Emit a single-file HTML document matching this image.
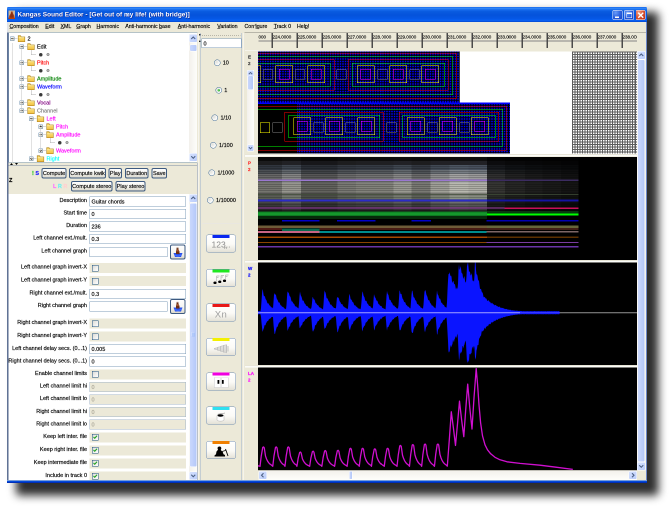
<!DOCTYPE html>
<html><head><meta charset="utf-8"><title>Kangas Sound Editor</title><style>
html,body{margin:0;padding:0;background:#fff;width:670px;height:506px;overflow:hidden}
#s{position:absolute;left:0;top:0;width:1340px;height:1012px;transform:scale(.5);transform-origin:0 0;will-change:transform;font-family:"Liberation Sans",sans-serif;font-size:11px;color:#000}
#s div,#s span,#s svg{position:absolute;display:block}
#s .t{white-space:nowrap;-webkit-text-stroke:.3px currentColor}
#s b{position:static;display:inline}
u{text-decoration:underline}
</style></head><body><div id="s">
<div style="left:32px;top:24px;width:1285px;height:967px;background:#2e2e2e;filter:blur(9px);border-radius:6px"></div>
<div style="left:14px;top:14px;width:1280px;height:952px;background:#ece9d8;border-radius:2.5px 2.5px 0 0;"></div>
<div style="left:14px;top:14px;width:1280px;height:30px;border-radius:2.5px 2.5px 0 0;background:linear-gradient(#0a5ae8 0,#3b8ffa 7%,#1a6ff0 16%,#0a5be0 30%,#0553dc 55%,#0658e6 78%,#0a62f5 90%,#0347cf 100%)"></div>
<div style="left:14px;top:44px;width:2.5px;height:21px;background:#dfe2ea"></div>
<div style="left:14px;top:65px;width:2.5px;height:901px;background:linear-gradient(90deg,#8c9ab4,#4d6187 40%,#5a6d92)"></div>
<div style="left:1291.5px;top:44px;width:2.5px;height:922px;background:linear-gradient(90deg,#c8d0e4,#5f7fca 45%,#3a5ab0)"></div>
<div style="left:14px;top:961px;width:1280px;height:5px;background:linear-gradient(#0855dd,#0046d8 60%,#001ea0)"></div>
<svg style="left:17px;top:21px" width="13" height="17" viewBox="0 0 16 18" preserveAspectRatio="none"><rect width="16" height="18" fill="#cdb596"/><path d="M6.500 2h3.500l1 4 3.500 5.500V18H1.500v-6l4-6z" fill="#a8421e"/><path d="M7 4h2l1 3 2 4v7H4v-6l2-5z" fill="#8c3012"/><rect x="0" y="15" width="16" height="3" fill="#b4400f"/></svg>
<span class="t" style="left:35px;top:20.0px;line-height:18px;font-size:13px;color:#fff;font-weight:bold;text-shadow:1px 1px 0 #0a1883;-webkit-text-stroke:0">Kangas Sound Editor - [Get out of my life! (with bridge)]</span>
<div style="left:1225px;top:20px;width:20px;height:19.5px;background:radial-gradient(circle at 30% 25%,#6a9cf8,#2c62e0 50%,#1c48c8 85%);border:1px solid #fff;border-radius:3px;box-sizing:border-box"></div>
<div style="left:1230px;top:33px;width:8px;height:3px;background:#fff"></div>
<div style="left:1248px;top:20px;width:20px;height:19.5px;background:radial-gradient(circle at 30% 25%,#6a9cf8,#2c62e0 50%,#1c48c8 85%);border:1px solid #fff;border-radius:3px;box-sizing:border-box"></div>
<div style="left:1253px;top:25px;width:11px;height:11px;border:1px solid #fff;border-top:3px solid #fff;box-sizing:border-box"></div>
<div style="left:1271px;top:20px;width:20px;height:19.5px;background:radial-gradient(circle at 30% 25%,#f0a088,#dc5a38 45%,#c4381c 80%);border:1px solid #fff;border-radius:3px;box-sizing:border-box"></div>
<svg style="left:1275px;top:24px" width="13" height="13" viewBox="0 0 13 13"><path d="M1.500 1.500l10 10M11.500 1.500l-10 10" stroke="#fff" stroke-width="2.8"/></svg>
<div style="left:17px;top:44px;width:1274.5px;height:20.5px;background:#ece9d8"></div>
<span class="t" style="left:19px;top:45.25px;line-height:15.5px;font-size:10.5px;"><u>C</u>omposition</span>
<span class="t" style="left:90.5px;top:45.25px;line-height:15.5px;font-size:10.5px;"><u>E</u>dit</span>
<span class="t" style="left:121px;top:45.25px;line-height:15.5px;font-size:10.5px;"><u>X</u>ML</span>
<span class="t" style="left:152.5px;top:45.25px;line-height:15.5px;font-size:10.5px;"><u>G</u>raph</span>
<span class="t" style="left:193px;top:45.25px;line-height:15.5px;font-size:10.5px;"><u>H</u>armonic</span>
<span class="t" style="left:250.5px;top:45.25px;line-height:15.5px;font-size:10.5px;">Anti-harmonic <u>b</u>ase</span>
<span class="t" style="left:355.5px;top:45.25px;line-height:15.5px;font-size:10.5px;"><u>A</u>nti-harmonic</span>
<span class="t" style="left:434.5px;top:45.25px;line-height:15.5px;font-size:10.5px;"><u>V</u>ariation</span>
<span class="t" style="left:489px;top:45.25px;line-height:15.5px;font-size:10.5px;">Conf<u>i</u>gure</span>
<span class="t" style="left:547.5px;top:45.25px;line-height:15.5px;font-size:10.5px;"><u>T</u>rack 0</span>
<span class="t" style="left:594px;top:45.25px;line-height:15.5px;font-size:10.5px;">Hel<u>p</u>!</span>
<div style="left:16.5px;top:65px;width:378.5px;height:260px;background:#fff;border:1px solid #7f9db9;box-sizing:border-box"></div>
<div style="left:29px;top:77.4px;width:6px;height:1px;background:#b8b8b8"></div>
<div style="left:19.5px;top:72.9px;width:9px;height:9px;border:1px solid #7898b5;box-sizing:border-box;background:linear-gradient(135deg,#fff,#c9c5b5);border-radius:1px"></div>
<div style="left:21.5px;top:76.9px;width:5px;height:1px;background:#000"></div>
<svg style="left:34.5px;top:70.4px" width="16" height="14" viewBox="0 0 17 14" preserveAspectRatio="none"><path d="M1.5 1.500h5l1.500 2.500H15.500v9.500H1.500z" fill="#f7cf58" stroke="#b08a28" stroke-width="1.3"/><path d="M2.500 5.500h12" stroke="#ffeea0" stroke-width="2"/><path d="M2 12.500h13" stroke="#e0a830" stroke-width="1.6"/></svg>
<span class="t" style="left:55px;top:68.7px;line-height:16px;font-size:11px;color:#000">2</span>
<div style="left:48px;top:93.4px;width:6px;height:1px;background:#b8b8b8"></div>
<div style="left:38.5px;top:88.9px;width:9px;height:9px;border:1px solid #7898b5;box-sizing:border-box;background:linear-gradient(135deg,#fff,#c9c5b5);border-radius:1px"></div>
<div style="left:40.5px;top:92.9px;width:5px;height:1px;background:#000"></div>
<svg style="left:53.5px;top:86.4px" width="16" height="14" viewBox="0 0 17 14" preserveAspectRatio="none"><path d="M1.5 1.500h5l1.500 2.500H15.500v9.500H1.500z" fill="#f7cf58" stroke="#b08a28" stroke-width="1.3"/><path d="M2.500 5.500h12" stroke="#ffeea0" stroke-width="2"/><path d="M2 12.500h13" stroke="#e0a830" stroke-width="1.6"/></svg>
<span class="t" style="left:74px;top:84.7px;line-height:16px;font-size:11px;color:#000">Edit</span>
<div style="left:62px;top:100.4px;width:1px;height:9px;background:#b0b0b0"></div>
<div style="left:62px;top:109.4px;width:10px;height:1px;background:#b0b0b0"></div>
<div style="left:77.5px;top:105.9px;width:7px;height:7px;background:#3a3a3a;border-radius:50%"></div>
<div style="left:93px;top:106.4px;width:6px;height:6px;background:#b4b4b4;border:1.5px solid #707070;box-sizing:border-box;border-radius:50%"></div>
<div style="left:48px;top:125.4px;width:6px;height:1px;background:#b8b8b8"></div>
<div style="left:38.5px;top:120.9px;width:9px;height:9px;border:1px solid #7898b5;box-sizing:border-box;background:linear-gradient(135deg,#fff,#c9c5b5);border-radius:1px"></div>
<div style="left:40.5px;top:124.9px;width:5px;height:1px;background:#000"></div>
<svg style="left:53.5px;top:118.4px" width="16" height="14" viewBox="0 0 17 14" preserveAspectRatio="none"><path d="M1.5 1.500h5l1.500 2.500H15.500v9.500H1.500z" fill="#f7cf58" stroke="#b08a28" stroke-width="1.3"/><path d="M2.500 5.500h12" stroke="#ffeea0" stroke-width="2"/><path d="M2 12.500h13" stroke="#e0a830" stroke-width="1.6"/></svg>
<span class="t" style="left:74px;top:116.7px;line-height:16px;font-size:11px;color:#ff0000">Pitch</span>
<div style="left:62px;top:132.4px;width:1px;height:9px;background:#b0b0b0"></div>
<div style="left:62px;top:141.4px;width:10px;height:1px;background:#b0b0b0"></div>
<div style="left:77.5px;top:137.9px;width:7px;height:7px;background:#3a3a3a;border-radius:50%"></div>
<div style="left:93px;top:138.4px;width:6px;height:6px;background:#b4b4b4;border:1.5px solid #707070;box-sizing:border-box;border-radius:50%"></div>
<div style="left:48px;top:157.4px;width:6px;height:1px;background:#b8b8b8"></div>
<div style="left:38.5px;top:152.9px;width:9px;height:9px;border:1px solid #7898b5;box-sizing:border-box;background:linear-gradient(135deg,#fff,#c9c5b5);border-radius:1px"></div>
<div style="left:40.5px;top:156.9px;width:5px;height:1px;background:#000"></div>
<div style="left:42.5px;top:154.9px;width:1px;height:5px;background:#000"></div>
<svg style="left:53.5px;top:150.4px" width="16" height="14" viewBox="0 0 17 14" preserveAspectRatio="none"><path d="M1.5 1.500h5l1.500 2.500H15.500v9.500H1.500z" fill="#f7cf58" stroke="#b08a28" stroke-width="1.3"/><path d="M2.500 5.500h12" stroke="#ffeea0" stroke-width="2"/><path d="M2 12.500h13" stroke="#e0a830" stroke-width="1.6"/></svg>
<span class="t" style="left:74px;top:148.70000000000002px;line-height:16px;font-size:11px;color:#008000">Amplitude</span>
<div style="left:48px;top:173.4px;width:6px;height:1px;background:#b8b8b8"></div>
<div style="left:38.5px;top:168.9px;width:9px;height:9px;border:1px solid #7898b5;box-sizing:border-box;background:linear-gradient(135deg,#fff,#c9c5b5);border-radius:1px"></div>
<div style="left:40.5px;top:172.9px;width:5px;height:1px;background:#000"></div>
<svg style="left:53.5px;top:166.4px" width="16" height="14" viewBox="0 0 17 14" preserveAspectRatio="none"><path d="M1.5 1.500h5l1.500 2.500H15.500v9.500H1.500z" fill="#f7cf58" stroke="#b08a28" stroke-width="1.3"/><path d="M2.500 5.500h12" stroke="#ffeea0" stroke-width="2"/><path d="M2 12.500h13" stroke="#e0a830" stroke-width="1.6"/></svg>
<span class="t" style="left:74px;top:164.70000000000002px;line-height:16px;font-size:11px;color:#0000ff">Waveform</span>
<div style="left:62px;top:180.4px;width:1px;height:9px;background:#b0b0b0"></div>
<div style="left:62px;top:189.4px;width:10px;height:1px;background:#b0b0b0"></div>
<div style="left:77.5px;top:185.9px;width:7px;height:7px;background:#3a3a3a;border-radius:50%"></div>
<div style="left:93px;top:186.4px;width:6px;height:6px;background:#b4b4b4;border:1.5px solid #707070;box-sizing:border-box;border-radius:50%"></div>
<div style="left:48px;top:205.4px;width:6px;height:1px;background:#b8b8b8"></div>
<div style="left:38.5px;top:200.9px;width:9px;height:9px;border:1px solid #7898b5;box-sizing:border-box;background:linear-gradient(135deg,#fff,#c9c5b5);border-radius:1px"></div>
<div style="left:40.5px;top:204.9px;width:5px;height:1px;background:#000"></div>
<div style="left:42.5px;top:202.9px;width:1px;height:5px;background:#000"></div>
<svg style="left:53.5px;top:198.4px" width="16" height="14" viewBox="0 0 17 14" preserveAspectRatio="none"><path d="M1.5 1.500h5l1.500 2.500H15.500v9.500H1.500z" fill="#f7cf58" stroke="#b08a28" stroke-width="1.3"/><path d="M2.500 5.500h12" stroke="#ffeea0" stroke-width="2"/><path d="M2 12.500h13" stroke="#e0a830" stroke-width="1.6"/></svg>
<span class="t" style="left:74px;top:196.70000000000002px;line-height:16px;font-size:11px;color:#800080">Vocal</span>
<div style="left:48px;top:221.4px;width:6px;height:1px;background:#b8b8b8"></div>
<div style="left:38.5px;top:216.9px;width:9px;height:9px;border:1px solid #7898b5;box-sizing:border-box;background:linear-gradient(135deg,#fff,#c9c5b5);border-radius:1px"></div>
<div style="left:40.5px;top:220.9px;width:5px;height:1px;background:#000"></div>
<svg style="left:53.5px;top:214.4px" width="16" height="14" viewBox="0 0 17 14" preserveAspectRatio="none"><path d="M1.5 1.500h5l1.500 2.500H15.500v9.500H1.500z" fill="#f7cf58" stroke="#b08a28" stroke-width="1.3"/><path d="M2.500 5.500h12" stroke="#ffeea0" stroke-width="2"/><path d="M2 12.500h13" stroke="#e0a830" stroke-width="1.6"/></svg>
<span class="t" style="left:74px;top:212.70000000000002px;line-height:16px;font-size:11px;color:#808080">Channel</span>
<div style="left:67px;top:237.4px;width:6px;height:1px;background:#b8b8b8"></div>
<div style="left:57.5px;top:232.9px;width:9px;height:9px;border:1px solid #7898b5;box-sizing:border-box;background:linear-gradient(135deg,#fff,#c9c5b5);border-radius:1px"></div>
<div style="left:59.5px;top:236.9px;width:5px;height:1px;background:#000"></div>
<svg style="left:72.5px;top:230.4px" width="16" height="14" viewBox="0 0 17 14" preserveAspectRatio="none"><path d="M1.5 1.500h5l1.500 2.500H15.500v9.500H1.500z" fill="#f7cf58" stroke="#b08a28" stroke-width="1.3"/><path d="M2.500 5.500h12" stroke="#ffeea0" stroke-width="2"/><path d="M2 12.500h13" stroke="#e0a830" stroke-width="1.6"/></svg>
<span class="t" style="left:93px;top:228.70000000000002px;line-height:16px;font-size:11px;color:#ff00ff">Left</span>
<div style="left:86px;top:253.4px;width:6px;height:1px;background:#b8b8b8"></div>
<div style="left:76.5px;top:248.9px;width:9px;height:9px;border:1px solid #7898b5;box-sizing:border-box;background:linear-gradient(135deg,#fff,#c9c5b5);border-radius:1px"></div>
<div style="left:78.5px;top:252.9px;width:5px;height:1px;background:#000"></div>
<div style="left:80.5px;top:250.9px;width:1px;height:5px;background:#000"></div>
<svg style="left:91.5px;top:246.4px" width="16" height="14" viewBox="0 0 17 14" preserveAspectRatio="none"><path d="M1.5 1.500h5l1.500 2.500H15.500v9.500H1.500z" fill="#f7cf58" stroke="#b08a28" stroke-width="1.3"/><path d="M2.500 5.500h12" stroke="#ffeea0" stroke-width="2"/><path d="M2 12.500h13" stroke="#e0a830" stroke-width="1.6"/></svg>
<span class="t" style="left:112px;top:244.70000000000002px;line-height:16px;font-size:11px;color:#ff00ff">Pitch</span>
<div style="left:86px;top:269.4px;width:6px;height:1px;background:#b8b8b8"></div>
<div style="left:76.5px;top:264.9px;width:9px;height:9px;border:1px solid #7898b5;box-sizing:border-box;background:linear-gradient(135deg,#fff,#c9c5b5);border-radius:1px"></div>
<div style="left:78.5px;top:268.9px;width:5px;height:1px;background:#000"></div>
<svg style="left:91.5px;top:262.4px" width="16" height="14" viewBox="0 0 17 14" preserveAspectRatio="none"><path d="M1.5 1.500h5l1.500 2.500H15.500v9.500H1.500z" fill="#f7cf58" stroke="#b08a28" stroke-width="1.3"/><path d="M2.500 5.500h12" stroke="#ffeea0" stroke-width="2"/><path d="M2 12.500h13" stroke="#e0a830" stroke-width="1.6"/></svg>
<span class="t" style="left:112px;top:260.7px;line-height:16px;font-size:11px;color:#ff00ff">Amplitude</span>
<div style="left:100px;top:276.4px;width:1px;height:9px;background:#b0b0b0"></div>
<div style="left:100px;top:285.4px;width:10px;height:1px;background:#b0b0b0"></div>
<div style="left:115.5px;top:281.9px;width:7px;height:7px;background:#3a3a3a;border-radius:50%"></div>
<div style="left:131px;top:282.4px;width:6px;height:6px;background:#b4b4b4;border:1.5px solid #707070;box-sizing:border-box;border-radius:50%"></div>
<div style="left:86px;top:301.4px;width:6px;height:1px;background:#b8b8b8"></div>
<div style="left:76.5px;top:296.9px;width:9px;height:9px;border:1px solid #7898b5;box-sizing:border-box;background:linear-gradient(135deg,#fff,#c9c5b5);border-radius:1px"></div>
<div style="left:78.5px;top:300.9px;width:5px;height:1px;background:#000"></div>
<div style="left:80.5px;top:298.9px;width:1px;height:5px;background:#000"></div>
<svg style="left:91.5px;top:294.4px" width="16" height="14" viewBox="0 0 17 14" preserveAspectRatio="none"><path d="M1.5 1.500h5l1.500 2.500H15.500v9.500H1.500z" fill="#f7cf58" stroke="#b08a28" stroke-width="1.3"/><path d="M2.500 5.500h12" stroke="#ffeea0" stroke-width="2"/><path d="M2 12.500h13" stroke="#e0a830" stroke-width="1.6"/></svg>
<span class="t" style="left:112px;top:292.7px;line-height:16px;font-size:11px;color:#ff00ff">Waveform</span>
<div style="left:67px;top:317.4px;width:6px;height:1px;background:#b8b8b8"></div>
<div style="left:57.5px;top:312.9px;width:9px;height:9px;border:1px solid #7898b5;box-sizing:border-box;background:linear-gradient(135deg,#fff,#c9c5b5);border-radius:1px"></div>
<div style="left:59.5px;top:316.9px;width:5px;height:1px;background:#000"></div>
<div style="left:61.5px;top:314.9px;width:1px;height:5px;background:#000"></div>
<svg style="left:72.5px;top:310.4px" width="16" height="14" viewBox="0 0 17 14" preserveAspectRatio="none"><path d="M1.5 1.500h5l1.500 2.500H15.500v9.500H1.500z" fill="#f7cf58" stroke="#b08a28" stroke-width="1.3"/><path d="M2.500 5.500h12" stroke="#ffeea0" stroke-width="2"/><path d="M2 12.500h13" stroke="#e0a830" stroke-width="1.6"/></svg>
<span class="t" style="left:93px;top:308.7px;line-height:16px;font-size:11px;color:#00ffff">Right</span>
<div style="left:24px;top:86px;width:1px;height:239px;background:#c4c4c4"></div>
<div style="left:43px;top:98px;width:1px;height:124px;background:#c4c4c4"></div>
<div style="left:62px;top:238px;width:1px;height:80px;background:#c4c4c4"></div>
<div style="left:81px;top:254px;width:1px;height:48px;background:#c4c4c4"></div>
<div style="left:378px;top:68px;width:17px;height:255px;background:linear-gradient(90deg,#f3f1ec,#fefefb)"></div>
<div style="left:378px;top:68px;width:17px;height:17px;background:linear-gradient(135deg,#d6e2ff,#b9cbfa);border:1px solid #fff;border-radius:3px;box-sizing:border-box"></div>
<svg style="left:378px;top:68px" width="17" height="17" viewBox="0 0 17 17"><path d="M4.5 10l4-4 4 4" fill="none" stroke="#4d6185" stroke-width="2.2"/></svg>
<div style="left:378px;top:306px;width:17px;height:17px;background:linear-gradient(135deg,#d6e2ff,#b9cbfa);border:1px solid #fff;border-radius:3px;box-sizing:border-box"></div>
<svg style="left:378px;top:306px" width="17" height="17" viewBox="0 0 17 17"><path d="M4.5 6.5l4 4 4-4" fill="none" stroke="#4d6185" stroke-width="2.2"/></svg>
<div style="left:379px;top:89px;width:15px;height:14px;background:linear-gradient(90deg,#c9d7fd,#c2d2fc 40%,#b4c8f8);border:1px solid #fff;border-radius:3px;box-sizing:border-box"></div>
<div style="left:16.5px;top:325px;width:378px;height:6px;background:#ece9d8"></div>
<svg style="left:20px;top:325px" width="20" height="5" viewBox="0 0 20 5"><path d="M0 5l3-4 3 4zM10 1l3 4 3-4z" fill="#000"/></svg>
<div style="left:16.5px;top:330px;width:378px;height:58px;background:#ece9d8;border-top:1px solid #7b8ba5;box-sizing:border-box"></div>
<span class="t" style="left:18px;top:351.5px;line-height:16px;font-size:11px;font-weight:bold">Z</span>
<span class="t" style="left:64px;top:337.5px;line-height:16px;font-size:11px;"><b style="color:#00c000">!</b> <b style="color:#2020ff">S</b></span>
<div style="left:83px;top:336px;width:50px;height:21px;border:2px solid #3d5a80;border-radius:4px;box-sizing:border-box;background:linear-gradient(#fff,#f4f3ee 60%,#dcd9cc)"></div>
<span class="t" style="left:-42.0px;width:300px;text-align:center;top:338.0px;line-height:16px;font-size:11px;">Compute</span>
<div style="left:138px;top:336px;width:74px;height:21px;border:2px solid #3d5a80;border-radius:4px;box-sizing:border-box;background:linear-gradient(#fff,#f4f3ee 60%,#dcd9cc)"></div>
<span class="t" style="left:25.0px;width:300px;text-align:center;top:338.0px;line-height:16px;font-size:11px;">Compute kwik</span>
<div style="left:217px;top:336px;width:27px;height:21px;border:2px solid #3d5a80;border-radius:4px;box-sizing:border-box;background:linear-gradient(#fff,#f4f3ee 60%,#dcd9cc)"></div>
<span class="t" style="left:80.5px;width:300px;text-align:center;top:338.0px;line-height:16px;font-size:11px;">Play</span>
<div style="left:250px;top:336px;width:47px;height:21px;border:2px solid #3d5a80;border-radius:4px;box-sizing:border-box;background:linear-gradient(#fff,#f4f3ee 60%,#dcd9cc)"></div>
<span class="t" style="left:123.5px;width:300px;text-align:center;top:338.0px;line-height:16px;font-size:11px;">Duration</span>
<div style="left:303px;top:336px;width:31px;height:21px;border:2px solid #3d5a80;border-radius:4px;box-sizing:border-box;background:linear-gradient(#fff,#f4f3ee 60%,#dcd9cc)"></div>
<span class="t" style="left:168.5px;width:300px;text-align:center;top:338.0px;line-height:16px;font-size:11px;">Save</span>
<span class="t" style="left:106px;top:363.5px;line-height:16px;font-size:11px;"><b style="color:#ff70ff">L</b> <b style="color:#70f0f0">R</b> <b style="color:#ffd0d0">R</b></span>
<div style="left:142px;top:362px;width:83px;height:21px;border:2px solid #3d5a80;border-radius:4px;box-sizing:border-box;background:linear-gradient(#fff,#f4f3ee 60%,#dcd9cc)"></div>
<span class="t" style="left:33.5px;width:300px;text-align:center;top:364.0px;line-height:16px;font-size:11px;">Compute stereo</span>
<div style="left:231px;top:362px;width:60px;height:21px;border:2px solid #3d5a80;border-radius:4px;box-sizing:border-box;background:linear-gradient(#fff,#f4f3ee 60%,#dcd9cc)"></div>
<span class="t" style="left:111.0px;width:300px;text-align:center;top:364.0px;line-height:16px;font-size:11px;">Play stereo</span>
<div style="left:16.5px;top:388px;width:362px;height:572px;background:#fff"></div>
<span class="t" style="right:1166px;top:392.0px;line-height:16px;font-size:11px;">Description</span>
<div style="left:179px;top:392.5px;width:193px;height:20px;background:#fff;border:1px solid #7f9db9;box-sizing:border-box"></div>
<span class="t" style="left:183px;top:394.5px;line-height:16px;font-size:11px;">Guitar chords</span>
<span class="t" style="right:1166px;top:417.0px;line-height:16px;font-size:11px;">Start time</span>
<div style="left:179px;top:417.5px;width:193px;height:20px;background:#fff;border:1px solid #7f9db9;box-sizing:border-box"></div>
<span class="t" style="left:183px;top:419.5px;line-height:16px;font-size:11px;">0</span>
<span class="t" style="right:1166px;top:442.0px;line-height:16px;font-size:11px;">Duration</span>
<div style="left:179px;top:442.5px;width:193px;height:20px;background:#fff;border:1px solid #7f9db9;box-sizing:border-box"></div>
<span class="t" style="left:183px;top:444.5px;line-height:16px;font-size:11px;">236</span>
<span class="t" style="right:1166px;top:467.0px;line-height:16px;font-size:11px;">Left channel ext./mult.</span>
<div style="left:179px;top:467.5px;width:193px;height:20px;background:#fff;border:1px solid #7f9db9;box-sizing:border-box"></div>
<span class="t" style="left:183px;top:469.5px;line-height:16px;font-size:11px;">0.3</span>
<span class="t" style="right:1166px;top:493.0px;line-height:16px;font-size:11px;">Left channel graph</span>
<div style="left:179px;top:493.5px;width:156px;height:20px;background:#fff;border:1px solid #7f9db9;box-sizing:border-box"></div>
<span class="t" style="left:183px;top:495.5px;line-height:16px;font-size:11px;"></span>
<div style="left:340px;top:489px;width:31px;height:30px;border:2px solid #3d5a80;border-radius:4px;box-sizing:border-box;background:linear-gradient(#fff,#f4f3ee 60%,#dcd9cc)"></div>
<svg style="left:346px;top:493px" width="20" height="22" viewBox="0 0 20 22"><path d="M1 13h18l-3 8H4z" fill="#2a50e8"/><path d="M7 1l1 3 1-3 1 3 1-3v5l2 4v5H6v-5l1-4z" fill="#6b2e12"/><path d="M8 6h3l1 4H7z" fill="#a0522d"/><path d="M3 15l7 3 7-3v3l-7 3-7-3z" fill="#3d6cff"/></svg>
<span class="t" style="right:1166px;top:525.0px;line-height:16px;font-size:11px;">Left channel graph invert-X</span>
<div style="left:179px;top:526px;width:193px;height:20px;background:#ece9d8"></div>
<div style="left:184px;top:529.5px;width:13px;height:13px;border:1px solid #1c5180;box-sizing:border-box;background:linear-gradient(135deg,#dcdcd7,#fff)"></div>
<span class="t" style="right:1166px;top:551.0px;line-height:16px;font-size:11px;">Left channel graph invert-Y</span>
<div style="left:179px;top:552px;width:193px;height:20px;background:#ece9d8"></div>
<div style="left:184px;top:555.5px;width:13px;height:13px;border:1px solid #1c5180;box-sizing:border-box;background:linear-gradient(135deg,#dcdcd7,#fff)"></div>
<span class="t" style="right:1166px;top:577.0px;line-height:16px;font-size:11px;">Right channel ext./mult.</span>
<div style="left:179px;top:577.5px;width:193px;height:20px;background:#fff;border:1px solid #7f9db9;box-sizing:border-box"></div>
<span class="t" style="left:183px;top:579.5px;line-height:16px;font-size:11px;">0.3</span>
<span class="t" style="right:1166px;top:602.0px;line-height:16px;font-size:11px;">Right channel graph</span>
<div style="left:179px;top:602.5px;width:156px;height:20px;background:#fff;border:1px solid #7f9db9;box-sizing:border-box"></div>
<span class="t" style="left:183px;top:604.5px;line-height:16px;font-size:11px;"></span>
<div style="left:340px;top:598px;width:31px;height:30px;border:2px solid #3d5a80;border-radius:4px;box-sizing:border-box;background:linear-gradient(#fff,#f4f3ee 60%,#dcd9cc)"></div>
<svg style="left:346px;top:602px" width="20" height="22" viewBox="0 0 20 22"><path d="M1 13h18l-3 8H4z" fill="#2a50e8"/><path d="M7 1l1 3 1-3 1 3 1-3v5l2 4v5H6v-5l1-4z" fill="#6b2e12"/><path d="M8 6h3l1 4H7z" fill="#a0522d"/><path d="M3 15l7 3 7-3v3l-7 3-7-3z" fill="#3d6cff"/></svg>
<span class="t" style="right:1166px;top:636.0px;line-height:16px;font-size:11px;">Right channel graph invert-X</span>
<div style="left:179px;top:637px;width:193px;height:20px;background:#ece9d8"></div>
<div style="left:184px;top:640.5px;width:13px;height:13px;border:1px solid #1c5180;box-sizing:border-box;background:linear-gradient(135deg,#dcdcd7,#fff)"></div>
<span class="t" style="right:1166px;top:662.0px;line-height:16px;font-size:11px;">Right channel graph invert-Y</span>
<div style="left:179px;top:663px;width:193px;height:20px;background:#ece9d8"></div>
<div style="left:184px;top:666.5px;width:13px;height:13px;border:1px solid #1c5180;box-sizing:border-box;background:linear-gradient(135deg,#dcdcd7,#fff)"></div>
<span class="t" style="right:1166px;top:687.5px;line-height:16px;font-size:11px;">Left channel delay secs. (0...1)</span>
<div style="left:179px;top:688.0px;width:193px;height:20px;background:#fff;border:1px solid #7f9db9;box-sizing:border-box"></div>
<span class="t" style="left:183px;top:690.0px;line-height:16px;font-size:11px;">0.005</span>
<span class="t" style="right:1166px;top:712.5px;line-height:16px;font-size:11px;">Right channel delay secs. (0...1)</span>
<div style="left:179px;top:713.0px;width:193px;height:20px;background:#fff;border:1px solid #7f9db9;box-sizing:border-box"></div>
<span class="t" style="left:183px;top:715.0px;line-height:16px;font-size:11px;">0</span>
<span class="t" style="right:1166px;top:737.5px;line-height:16px;font-size:11px;">Enable channel limits</span>
<div style="left:179px;top:738.5px;width:193px;height:20px;background:#ece9d8"></div>
<div style="left:184px;top:742.0px;width:13px;height:13px;border:1px solid #1c5180;box-sizing:border-box;background:linear-gradient(135deg,#dcdcd7,#fff)"></div>
<span class="t" style="right:1166px;top:763.0px;line-height:16px;font-size:11px;">Left channel limit hi</span>
<div style="left:179px;top:763.5px;width:193px;height:20px;background:#ece9d8;border:1px solid #a3b5c8;box-sizing:border-box"></div>
<span class="t" style="left:183px;top:765.5px;line-height:16px;font-size:11px;color:#aca899">0</span>
<span class="t" style="right:1166px;top:788.0px;line-height:16px;font-size:11px;">Left channel limit lo</span>
<div style="left:179px;top:788.5px;width:193px;height:20px;background:#ece9d8;border:1px solid #a3b5c8;box-sizing:border-box"></div>
<span class="t" style="left:183px;top:790.5px;line-height:16px;font-size:11px;color:#aca899">0</span>
<span class="t" style="right:1166px;top:813.5px;line-height:16px;font-size:11px;">Right channel limit hi</span>
<div style="left:179px;top:814.0px;width:193px;height:20px;background:#ece9d8;border:1px solid #a3b5c8;box-sizing:border-box"></div>
<span class="t" style="left:183px;top:816.0px;line-height:16px;font-size:11px;color:#aca899">0</span>
<span class="t" style="right:1166px;top:838.5px;line-height:16px;font-size:11px;">Right channel limit lo</span>
<div style="left:179px;top:839.0px;width:193px;height:20px;background:#ece9d8;border:1px solid #a3b5c8;box-sizing:border-box"></div>
<span class="t" style="left:183px;top:841.0px;line-height:16px;font-size:11px;color:#aca899">0</span>
<span class="t" style="right:1166px;top:863.5px;line-height:16px;font-size:11px;">Keep left inter. file</span>
<div style="left:179px;top:864.5px;width:193px;height:20px;background:#ece9d8"></div>
<div style="left:184px;top:868.0px;width:13px;height:13px;border:1px solid #1c5180;box-sizing:border-box;background:linear-gradient(135deg,#dcdcd7,#fff)"></div>
<svg style="left:184px;top:868.0px" width="13" height="13" viewBox="0 0 13 13"><path d="M3 6l2.5 2.5L10 3.5" fill="none" stroke="#21a121" stroke-width="2.2"/></svg>
<span class="t" style="right:1166px;top:889.5px;line-height:16px;font-size:11px;">Keep right inter. file</span>
<div style="left:179px;top:890.5px;width:193px;height:20px;background:#ece9d8"></div>
<div style="left:184px;top:894.0px;width:13px;height:13px;border:1px solid #1c5180;box-sizing:border-box;background:linear-gradient(135deg,#dcdcd7,#fff)"></div>
<svg style="left:184px;top:894.0px" width="13" height="13" viewBox="0 0 13 13"><path d="M3 6l2.5 2.5L10 3.5" fill="none" stroke="#21a121" stroke-width="2.2"/></svg>
<span class="t" style="right:1166px;top:915.5px;line-height:16px;font-size:11px;">Keep intermediate file</span>
<div style="left:179px;top:916.5px;width:193px;height:20px;background:#ece9d8"></div>
<div style="left:184px;top:920.0px;width:13px;height:13px;border:1px solid #1c5180;box-sizing:border-box;background:linear-gradient(135deg,#dcdcd7,#fff)"></div>
<svg style="left:184px;top:920.0px" width="13" height="13" viewBox="0 0 13 13"><path d="M3 6l2.5 2.5L10 3.5" fill="none" stroke="#21a121" stroke-width="2.2"/></svg>
<span class="t" style="right:1166px;top:941.5px;line-height:16px;font-size:11px;">Include in track 0</span>
<div style="left:179px;top:942.5px;width:193px;height:20px;background:#ece9d8"></div>
<div style="left:184px;top:946.0px;width:13px;height:13px;border:1px solid #1c5180;box-sizing:border-box;background:linear-gradient(135deg,#dcdcd7,#fff)"></div>
<svg style="left:184px;top:946.0px" width="13" height="13" viewBox="0 0 13 13"><path d="M3 6l2.5 2.5L10 3.5" fill="none" stroke="#21a121" stroke-width="2.2"/></svg>
<div style="left:378px;top:388px;width:17px;height:572px;background:linear-gradient(90deg,#f3f1ec,#fefefb)"></div>
<div style="left:378px;top:388px;width:17px;height:17px;background:linear-gradient(135deg,#d6e2ff,#b9cbfa);border:1px solid #fff;border-radius:3px;box-sizing:border-box"></div>
<svg style="left:378px;top:388px" width="17" height="17" viewBox="0 0 17 17"><path d="M4.5 10l4-4 4 4" fill="none" stroke="#4d6185" stroke-width="2.2"/></svg>
<div style="left:378px;top:943px;width:17px;height:17px;background:linear-gradient(135deg,#d6e2ff,#b9cbfa);border:1px solid #fff;border-radius:3px;box-sizing:border-box"></div>
<svg style="left:378px;top:943px" width="17" height="17" viewBox="0 0 17 17"><path d="M4.5 6.5l4 4 4-4" fill="none" stroke="#4d6185" stroke-width="2.2"/></svg>
<div style="left:379px;top:406px;width:15px;height:528px;background:linear-gradient(90deg,#c9d7fd,#c2d2fc 40%,#b4c8f8);border:1px solid #fff;border-radius:3px;box-sizing:border-box"></div>
<svg style="left:382px;top:664px" width="9" height="9" viewBox="0 0 9 9"><path d="M1 1h6M1 3h6M1 5h6M1 7h6" stroke="#eef4fe" stroke-width="1"/><path d="M2 2h6M2 4h6M2 6h6M2 8h6" stroke="#8cb0f8" stroke-width="1"/></svg>
<div style="left:394px;top:65px;width:7px;height:895px;background:#ece9d8"></div>
<div style="left:396px;top:65px;width:1px;height:895px;background:#fff"></div>
<div style="left:394px;top:325px;width:1.2px;height:635px;background:#8797b3"></div>
<div style="left:398px;top:68px;width:3px;height:3px;background:#000;border-radius:50%"></div>
<div style="left:398px;top:81px;width:3px;height:3px;background:#000;border-radius:50%"></div>
<div style="left:401px;top:65px;width:83px;height:895px;background:#ece9d8;border-left:1px solid #9cb0cc;border-right:1px solid #9cb0cc;box-sizing:border-box"></div>
<div style="left:404px;top:70px;width:77px;height:2px;background:repeating-linear-gradient(90deg,#b9b6a8 0 2px,transparent 2px 4px)"></div>
<div style="left:403px;top:77px;width:80px;height:19px;background:#fff;border:1px solid #7f9db9;box-sizing:border-box"></div>
<span class="t" style="left:407px;top:79.0px;line-height:16px;font-size:11px;">0</span>
<div style="left:427.5px;top:118.5px;width:13px;height:13px;border:1.6px solid #2f5d8c;border-radius:50%;box-sizing:border-box;background:radial-gradient(circle at 35% 35%,#e0e0da,#fff 70%)"></div>
<span class="t" style="left:445.5px;top:116.5px;line-height:16px;font-size:11px;">10</span>
<div style="left:430.5px;top:173.5px;width:13px;height:13px;border:1.6px solid #2f5d8c;border-radius:50%;box-sizing:border-box;background:radial-gradient(circle at 35% 35%,#e0e0da,#fff 70%)"></div>
<div style="left:434.5px;top:177.5px;width:5px;height:5px;border-radius:50%;background:radial-gradient(circle at 35% 35%,#6fe06f,#1a9a1a)"></div>
<span class="t" style="left:448.5px;top:171.5px;line-height:16px;font-size:11px;">1</span>
<div style="left:423.0px;top:228.5px;width:13px;height:13px;border:1.6px solid #2f5d8c;border-radius:50%;box-sizing:border-box;background:radial-gradient(circle at 35% 35%,#e0e0da,#fff 70%)"></div>
<span class="t" style="left:441.0px;top:226.5px;line-height:16px;font-size:11px;">1/10</span>
<div style="left:420.0px;top:283.5px;width:13px;height:13px;border:1.6px solid #2f5d8c;border-radius:50%;box-sizing:border-box;background:radial-gradient(circle at 35% 35%,#e0e0da,#fff 70%)"></div>
<span class="t" style="left:438.0px;top:281.5px;line-height:16px;font-size:11px;">1/100</span>
<div style="left:417.0px;top:338.5px;width:13px;height:13px;border:1.6px solid #2f5d8c;border-radius:50%;box-sizing:border-box;background:radial-gradient(circle at 35% 35%,#e0e0da,#fff 70%)"></div>
<span class="t" style="left:435.0px;top:336.5px;line-height:16px;font-size:11px;">1/1000</span>
<div style="left:414.0px;top:393.5px;width:13px;height:13px;border:1.6px solid #2f5d8c;border-radius:50%;box-sizing:border-box;background:radial-gradient(circle at 35% 35%,#e0e0da,#fff 70%)"></div>
<span class="t" style="left:432.0px;top:391.5px;line-height:16px;font-size:11px;">1/10000</span>
<div style="left:404px;top:446px;width:77px;height:1px;background:#d2cfc0"></div>
<div style="left:404px;top:447px;width:77px;height:1px;background:#fff"></div>
<div style="left:412px;top:469px;width:60px;height:36px;border:1.5px solid #6f8cb0;border-radius:5px;box-sizing:border-box;background:linear-gradient(#fff,#fbfaf6 55%,#e4e1d6)"></div>
<div style="left:425px;top:469.8px;width:33.5px;height:6px;background:#0a28f0"></div>
<svg style="left:420px;top:479px" width="44" height="24" viewBox="0 0 44 24"><text x="22" y="16" font-family="Liberation Sans,sans-serif" font-size="17" fill="#8c8c8c" text-anchor="middle">123..</text><text x="31" y="19" font-family="Liberation Sans,sans-serif" font-size="8" fill="#666" text-anchor="middle">n</text></svg>
<div style="left:412px;top:538px;width:60px;height:36px;border:1.5px solid #6f8cb0;border-radius:5px;box-sizing:border-box;background:linear-gradient(#fff,#fbfaf6 55%,#e4e1d6)"></div>
<div style="left:425px;top:538.8px;width:33.5px;height:6px;background:#20e820"></div>
<svg style="left:420px;top:548px" width="44" height="24" viewBox="0 0 44 24"><path d="M13 4v11M22 3v10M31 2v9M13 4h6M22 3h6M31 2h6M13 7h4M22 6h4M31 5h4" stroke="#b4b4b4" stroke-width="1.3" fill="none"/><ellipse cx="10" cy="17.500" rx="3.200" ry="2.600" fill="#000"/><ellipse cx="19.500" cy="15.500" rx="3.200" ry="2.600" fill="#000"/><ellipse cx="29" cy="13.500" rx="3.200" ry="2.600" fill="#000"/></svg>
<div style="left:412px;top:607px;width:60px;height:36px;border:1.5px solid #6f8cb0;border-radius:5px;box-sizing:border-box;background:linear-gradient(#fff,#fbfaf6 55%,#e4e1d6)"></div>
<div style="left:425px;top:607.8px;width:33.5px;height:6px;background:#e81818"></div>
<svg style="left:420px;top:617px" width="44" height="24" viewBox="0 0 44 24"><text x="22" y="17.500" font-family="Liberation Sans,sans-serif" font-size="19" fill="#a0a0a0" text-anchor="middle" letter-spacing="1">Xn</text></svg>
<div style="left:412px;top:675.5px;width:60px;height:36px;border:1.5px solid #6f8cb0;border-radius:5px;box-sizing:border-box;background:linear-gradient(#fff,#fbfaf6 55%,#e4e1d6)"></div>
<div style="left:425px;top:676.3px;width:33.5px;height:6px;background:#f4f000"></div>
<svg style="left:420px;top:685.5px" width="44" height="24" viewBox="0 0 44 24"><path d="M9 10v3M12 9v5M15 8v7M18 7v9M21 6v11M24 5v13M27 4v15M30 3.500v16M33 4v15M36 6v11" stroke="#b8b8b8" stroke-width="1.7"/><path d="M8 11.500L34 3M8 11.500L34 20" stroke="#c4c4c4" stroke-width="1" fill="none"/></svg>
<div style="left:412px;top:744.5px;width:60px;height:36px;border:1.5px solid #6f8cb0;border-radius:5px;box-sizing:border-box;background:linear-gradient(#fff,#fbfaf6 55%,#e4e1d6)"></div>
<div style="left:425px;top:745.3px;width:33.5px;height:6px;background:#f000e0"></div>
<svg style="left:420px;top:754.5px" width="44" height="24" viewBox="0 0 44 24"><rect x="8.500" y="0" width="28" height="20" fill="#fff" stroke="#c8c8c8" stroke-width="1"/><rect x="15" y="5" width="3.600" height="7.600" fill="#000"/><rect x="23.800" y="5" width="3.600" height="7.600" fill="#000"/><path d="M22 1v18" stroke="#aaa" stroke-width="1"/></svg>
<div style="left:412px;top:813px;width:60px;height:36px;border:1.5px solid #6f8cb0;border-radius:5px;box-sizing:border-box;background:linear-gradient(#fff,#fbfaf6 55%,#e4e1d6)"></div>
<div style="left:425px;top:813.8px;width:33.5px;height:6px;background:#30e0f0"></div>
<svg style="left:420px;top:823px" width="44" height="24" viewBox="0 0 44 24"><path d="M15 5.500l15-2.500" stroke="#888" stroke-width="1.2"/><path d="M14 8v9c0 3 14 3 14 0V8" fill="#fff" stroke="#b0b0b0" stroke-width="1"/><ellipse cx="21" cy="8" rx="6" ry="2.400" fill="#000"/></svg>
<div style="left:412px;top:881.5px;width:60px;height:36px;border:1.5px solid #6f8cb0;border-radius:5px;box-sizing:border-box;background:linear-gradient(#fff,#fbfaf6 55%,#e4e1d6)"></div>
<div style="left:425px;top:882.3px;width:33.5px;height:6px;background:#f08000"></div>
<svg style="left:420px;top:891.5px" width="44" height="24" viewBox="0 0 44 24"><path d="M19 1c2.500 0 4 2 3.500 4.500l-1 2.500 4 4 1.500 4.500 3 1.500v3H9v-2l3-2.500 1-5.500 3-3.500-1-3c0-2 1.500-3.500 4-3.500z" fill="#000"/><path d="M31 6l5 14" stroke="#000" stroke-width="1.8"/><path d="M24 11l7-2" stroke="#000" stroke-width="1.500"/></svg>
<div style="left:484px;top:65px;width:5px;height:895px;background:#ece9d8"></div>
<div style="left:486px;top:65px;width:1px;height:895px;background:#fff"></div>
<div style="left:489px;top:64.5px;width:802.5px;height:37.5px;background:#ece9d8;border-top:1.5px solid #85837a;box-sizing:border-box"></div>
<div style="left:517px;top:81px;width:757px;height:2px;background:#848484"></div>
<div style="left:517px;top:66px;width:757px;height:36px;overflow:hidden">
<span class="t" style="left:0;top:0;line-height:16px;font-size:9px;color:#222">000</span>
<div style="left:26.2px;top:0px;width:2.4px;height:30px;background:#4a4a4a"></div>
<span class="t" style="left:28px;top:0;line-height:16px;font-size:9px;color:#111">224.0000</span>
<div style="left:76.2px;top:0px;width:2.4px;height:30px;background:#4a4a4a"></div>
<span class="t" style="left:78px;top:0;line-height:16px;font-size:9px;color:#111">225.0000</span>
<div style="left:126.2px;top:0px;width:2.4px;height:30px;background:#4a4a4a"></div>
<span class="t" style="left:128px;top:0;line-height:16px;font-size:9px;color:#111">226.0000</span>
<div style="left:176.2px;top:0px;width:2.4px;height:30px;background:#4a4a4a"></div>
<span class="t" style="left:178px;top:0;line-height:16px;font-size:9px;color:#111">227.0000</span>
<div style="left:226.2px;top:0px;width:2.4px;height:30px;background:#4a4a4a"></div>
<span class="t" style="left:228px;top:0;line-height:16px;font-size:9px;color:#111">228.0000</span>
<div style="left:276.2px;top:0px;width:2.4px;height:30px;background:#4a4a4a"></div>
<span class="t" style="left:278px;top:0;line-height:16px;font-size:9px;color:#111">229.0000</span>
<div style="left:326.2px;top:0px;width:2.4px;height:30px;background:#4a4a4a"></div>
<span class="t" style="left:328px;top:0;line-height:16px;font-size:9px;color:#111">230.0000</span>
<div style="left:376.2px;top:0px;width:2.4px;height:30px;background:#4a4a4a"></div>
<span class="t" style="left:378px;top:0;line-height:16px;font-size:9px;color:#111">231.0000</span>
<div style="left:426.2px;top:0px;width:2.4px;height:30px;background:#4a4a4a"></div>
<span class="t" style="left:428px;top:0;line-height:16px;font-size:9px;color:#111">232.0000</span>
<div style="left:476.2px;top:0px;width:2.4px;height:30px;background:#4a4a4a"></div>
<span class="t" style="left:478px;top:0;line-height:16px;font-size:9px;color:#111">233.0000</span>
<div style="left:526.2px;top:0px;width:2.4px;height:30px;background:#4a4a4a"></div>
<span class="t" style="left:528px;top:0;line-height:16px;font-size:9px;color:#111">234.0000</span>
<div style="left:576.2px;top:0px;width:2.4px;height:30px;background:#4a4a4a"></div>
<span class="t" style="left:578px;top:0;line-height:16px;font-size:9px;color:#111">235.0000</span>
<div style="left:626.2px;top:0px;width:2.4px;height:30px;background:#4a4a4a"></div>
<span class="t" style="left:628px;top:0;line-height:16px;font-size:9px;color:#111">236.0000</span>
<div style="left:676.2px;top:0px;width:2.4px;height:30px;background:#4a4a4a"></div>
<span class="t" style="left:678px;top:0;line-height:16px;font-size:9px;color:#111">237.0000</span>
<div style="left:726.2px;top:0px;width:2.4px;height:30px;background:#4a4a4a"></div>
<span class="t" style="left:728px;top:0;line-height:16px;font-size:9px;color:#111">238.0000</span>
</div>
<div style="left:489px;top:101px;width:28px;height:208px;background:#ece9d8;border-left:1px solid #fff;border-top:1px solid #fff;box-sizing:border-box"></div>
<span class="t" style="left:496px;top:107.0px;line-height:14px;font-size:9px;color:#404040;font-weight:bold">E</span>
<span class="t" style="left:496px;top:120.0px;line-height:14px;font-size:9px;color:#404040;font-weight:bold">2</span>
<div style="left:489px;top:309px;width:785px;height:4px;background:linear-gradient(#d8d4c4,#fff 40%,#f4f2e8)"></div>
<div style="left:489px;top:313px;width:28px;height:208px;background:#ece9d8;border-left:1px solid #fff;border-top:1px solid #fff;box-sizing:border-box"></div>
<span class="t" style="left:496px;top:319.0px;line-height:14px;font-size:9px;color:#ff2a2a;font-weight:bold">P</span>
<span class="t" style="left:496px;top:332.0px;line-height:14px;font-size:9px;color:#ff2a2a;font-weight:bold">2</span>
<div style="left:489px;top:521px;width:785px;height:4px;background:linear-gradient(#d8d4c4,#fff 40%,#f4f2e8)"></div>
<div style="left:489px;top:524px;width:28px;height:207px;background:#ece9d8;border-left:1px solid #fff;border-top:1px solid #fff;box-sizing:border-box"></div>
<span class="t" style="left:496px;top:530.0px;line-height:14px;font-size:9px;color:#0000ff;font-weight:bold">W</span>
<span class="t" style="left:496px;top:543.0px;line-height:14px;font-size:9px;color:#0000ff;font-weight:bold">2</span>
<div style="left:489px;top:731px;width:785px;height:4px;background:linear-gradient(#d8d4c4,#fff 40%,#f4f2e8)"></div>
<div style="left:489px;top:734px;width:28px;height:208px;background:#ece9d8;border-left:1px solid #fff;border-top:1px solid #fff;box-sizing:border-box"></div>
<span class="t" style="left:496px;top:740.0px;line-height:14px;font-size:9px;color:#ff00ff;font-weight:bold">LA</span>
<span class="t" style="left:496px;top:753.0px;line-height:14px;font-size:9px;color:#ff00ff;font-weight:bold">2</span>
<div style="left:489px;top:942px;width:785px;height:4px;background:linear-gradient(#d8d4c4,#fff 40%,#f4f2e8)"></div>
<div style="left:494px;top:140px;width:14px;height:163px;background:linear-gradient(90deg,#f3f1ec,#fefefb)"></div>
<div style="left:494px;top:140px;width:14px;height:14px;background:linear-gradient(135deg,#d6e2ff,#b9cbfa);border:1px solid #fff;border-radius:3px;box-sizing:border-box"></div>
<svg style="left:494px;top:140px" width="14" height="14" viewBox="0 0 17 17"><path d="M4.5 10l4-4 4 4" fill="none" stroke="#4d6185" stroke-width="2.2"/></svg>
<div style="left:494px;top:289px;width:14px;height:14px;background:linear-gradient(135deg,#d6e2ff,#b9cbfa);border:1px solid #fff;border-radius:3px;box-sizing:border-box"></div>
<svg style="left:494px;top:289px" width="14" height="14" viewBox="0 0 17 17"><path d="M4.5 6.5l4 4 4-4" fill="none" stroke="#4d6185" stroke-width="2.2"/></svg>
<div style="left:495px;top:151px;width:12px;height:29px;background:linear-gradient(90deg,#c9d7fd,#c2d2fc 40%,#b4c8f8);border:1px solid #fff;border-radius:3px;box-sizing:border-box"></div>
<svg style="left:516px;top:102px" width="758" height="206" viewBox="516 102 758 206" >
<rect x="516" y="102" width="758" height="206" fill="#fff"/>
<rect x="516" y="102" width="758" height="1" fill="#ece9d8"/>
<rect x="516" y="103" width="403" height="103" fill="#0000ff"/>
<rect x="516" y="206" width="78" height="101" fill="#000"/>
<rect x="594" y="206" width="426" height="101" fill="#0000ff"/>
<path d="M1145 103V307M1150 103V307M1155 103V307M1160 103V307M1165 103V307M1170 103V307M1175 103V307M1180 103V307M1185 103V307M1190 103V307M1195 103V307M1200 103V307M1205 103V307M1210 103V307M1215 103V307M1220 103V307M1225 103V307M1230 103V307M1235 103V307M1240 103V307M1245 103V307M1250 103V307M1255 103V307M1260 103V307M1265 103V307M1270 103V307M1144 104H1274M1144 109H1274M1144 114H1274M1144 119H1274M1144 124H1274M1144 129H1274M1144 134H1274M1144 139H1274M1144 144H1274M1144 149H1274M1144 154H1274M1144 159H1274M1144 164H1274M1144 169H1274M1144 174H1274M1144 179H1274M1144 184H1274M1144 189H1274M1144 194H1274M1144 199H1274M1144 204H1274M1144 209H1274M1144 214H1274M1144 219H1274M1144 224H1274M1144 229H1274M1144 234H1274M1144 239H1274M1144 244H1274M1144 249H1274M1144 254H1274M1144 259H1274M1144 264H1274M1144 269H1274M1144 274H1274M1144 279H1274M1144 284H1274M1144 289H1274M1144 294H1274M1144 299H1274M1144 304H1274" stroke="#5c5c5c" stroke-width="2" fill="none"/>
<path d="M518.5 103V205M523.5 103V205M528.5 103V205M533.5 103V205M538.5 103V205M543.5 103V205M548.5 103V205M553.5 103V205M558.5 103V205M563.5 103V205M568.5 103V205M573.5 103V205M578.5 103V205M583.5 103V205M588.5 103V205M593.5 103V205M598.5 103V205M603.5 103V205M608.5 103V205M613.5 103V205M618.5 103V205M623.5 103V205M628.5 103V205M633.5 103V205M638.5 103V205M643.5 103V205M648.5 103V205M653.5 103V205M658.5 103V205M663.5 103V205M668.5 103V205M673.5 103V205M678.5 103V205M683.5 103V205M688.5 103V205M693.5 103V205M698.5 103V205M703.5 103V205M708.5 103V205M713.5 103V205M718.5 103V205M723.5 103V205M728.5 103V205M733.5 103V205M738.5 103V205M743.5 103V205M748.5 103V205M753.5 103V205M758.5 103V205M763.5 103V205M768.5 103V205M773.5 103V205M778.5 103V205M783.5 103V205M788.5 103V205M793.5 103V205M798.5 103V205M803.5 103V205M808.5 103V205M813.5 103V205M818.5 103V205M823.5 103V205M828.5 103V205M833.5 103V205M838.5 103V205M843.5 103V205M848.5 103V205M853.5 103V205M858.5 103V205M863.5 103V205M868.5 103V205M873.5 103V205M878.5 103V205M883.5 103V205M888.5 103V205M893.5 103V205M898.5 103V205M903.5 103V205M908.5 103V205M913.5 103V205M918.5 103V205M516 105.5H919M516 110.5H919M516 115.5H919M516 120.5H919M516 125.5H919M516 130.5H919M516 135.5H919M516 140.5H919M516 145.5H919M516 150.5H919M516 155.5H919M516 160.5H919M516 165.5H919M516 170.5H919M516 175.5H919M516 180.5H919M516 185.5H919M516 190.5H919M516 195.5H919M516 200.5H919M596.5 208V307M601.5 208V307M606.5 208V307M611.5 208V307M616.5 208V307M621.5 208V307M626.5 208V307M631.5 208V307M636.5 208V307M641.5 208V307M646.5 208V307M651.5 208V307M656.5 208V307M661.5 208V307M666.5 208V307M671.5 208V307M676.5 208V307M681.5 208V307M686.5 208V307M691.5 208V307M696.5 208V307M701.5 208V307M706.5 208V307M711.5 208V307M716.5 208V307M721.5 208V307M726.5 208V307M731.5 208V307M736.5 208V307M741.5 208V307M746.5 208V307M751.5 208V307M756.5 208V307M761.5 208V307M766.5 208V307M771.5 208V307M776.5 208V307M781.5 208V307M786.5 208V307M791.5 208V307M796.5 208V307M801.5 208V307M806.5 208V307M811.5 208V307M816.5 208V307M821.5 208V307M826.5 208V307M831.5 208V307M836.5 208V307M841.5 208V307M846.5 208V307M851.5 208V307M856.5 208V307M861.5 208V307M866.5 208V307M871.5 208V307M876.5 208V307M881.5 208V307M886.5 208V307M891.5 208V307M896.5 208V307M901.5 208V307M906.5 208V307M911.5 208V307M916.5 208V307M921.5 208V307M926.5 208V307M931.5 208V307M936.5 208V307M941.5 208V307M946.5 208V307M951.5 208V307M956.5 208V307M961.5 208V307M966.5 208V307M971.5 208V307M976.5 208V307M981.5 208V307M986.5 208V307M991.5 208V307M996.5 208V307M1001.5 208V307M1006.5 208V307M1011.5 208V307M1016.5 208V307M594 210.5H1020M594 215.5H1020M594 220.5H1020M594 225.5H1020M594 230.5H1020M594 235.5H1020M594 240.5H1020M594 245.5H1020M594 250.5H1020M594 255.5H1020M594 260.5H1020M594 265.5H1020M594 270.5H1020M594 275.5H1020M594 280.5H1020M594 285.5H1020M594 290.5H1020M594 295.5H1020M594 300.5H1020M594 305.5H1020" stroke="#000" stroke-width="2" fill="none"/>
<clipPath id="ct"><rect x="516" y="103" width="758" height="101"/></clipPath><clipPath id="cb"><rect x="516" y="208" width="758" height="99"/></clipPath>
<g clip-path="url(#ct)">
<rect x="300.5" y="106.5" width="612.0" height="91.0" fill="none" stroke="#ff0000" stroke-width="1"/>
<rect x="300.5" y="113.5" width="605.0" height="76.0" fill="none" stroke="#00ff00" stroke-width="1"/>
<rect x="300.5" y="119.5" width="368.0" height="61.0" fill="none" stroke="#ff0000" stroke-width="1"/>
<rect x="300.5" y="126.5" width="360.0" height="46.0" fill="none" stroke="#00ff00" stroke-width="1"/>
<rect x="696.5" y="119.5" width="200.0" height="61.0" fill="none" stroke="#ff0000" stroke-width="1"/>
<rect x="704.5" y="126.5" width="185.0" height="46.0" fill="none" stroke="#00ff00" stroke-width="1"/>
<rect x="487.5" y="131.5" width="34.0" height="34.0" fill="none" stroke="#ffff00" stroke-width="1"/>
<rect x="494.5" y="138.5" width="20.0" height="20.0" fill="none" stroke="#ff00ff" stroke-width="1"/>
<rect x="551.5" y="131.5" width="34.0" height="34.0" fill="none" stroke="#ffff00" stroke-width="1"/>
<rect x="558.5" y="138.5" width="20.0" height="20.0" fill="none" stroke="#ff00ff" stroke-width="1"/>
<rect x="615.5" y="131.5" width="34.0" height="34.0" fill="none" stroke="#ffff00" stroke-width="1"/>
<rect x="622.5" y="138.5" width="20.0" height="20.0" fill="none" stroke="#ff00ff" stroke-width="1"/>
<rect x="714.5" y="131.5" width="34.0" height="34.0" fill="none" stroke="#ffff00" stroke-width="1"/>
<rect x="721.5" y="138.5" width="20.0" height="20.0" fill="none" stroke="#ff00ff" stroke-width="1"/>
<rect x="779.5" y="131.5" width="34.0" height="34.0" fill="none" stroke="#ffff00" stroke-width="1"/>
<rect x="786.5" y="138.5" width="20.0" height="20.0" fill="none" stroke="#ff00ff" stroke-width="1"/>
<rect x="843.5" y="131.5" width="34.0" height="34.0" fill="none" stroke="#ffff00" stroke-width="1"/>
<rect x="850.5" y="138.5" width="20.0" height="20.0" fill="none" stroke="#ff00ff" stroke-width="1"/>
<rect x="526.5" y="139.5" width="19.0" height="19.0" fill="none" stroke="#808080" stroke-width="1"/>
<rect x="590.5" y="139.5" width="19.0" height="19.0" fill="none" stroke="#808080" stroke-width="1"/>
<rect x="673.5" y="139.5" width="19.0" height="19.0" fill="none" stroke="#808080" stroke-width="1"/>
<rect x="755.5" y="139.5" width="19.0" height="19.0" fill="none" stroke="#808080" stroke-width="1"/>
<rect x="819.5" y="139.5" width="19.0" height="19.0" fill="none" stroke="#808080" stroke-width="1"/>
</g>
<rect x="516" y="205" width="504" height="3" fill="#0000ff"/>
<g clip-path="url(#cb)">
<rect x="300.5" y="212.5" width="712.0" height="88.0" fill="none" stroke="#ff0000" stroke-width="1"/>
<rect x="300.5" y="218.5" width="705.0" height="74.0" fill="none" stroke="#00ff00" stroke-width="1"/>
<rect x="569.5" y="224.5" width="197.0" height="58.0" fill="none" stroke="#ff0000" stroke-width="1"/>
<rect x="577.5" y="230.5" width="182.0" height="45.0" fill="none" stroke="#00ff00" stroke-width="1"/>
<rect x="798.5" y="224.5" width="199.0" height="58.0" fill="none" stroke="#ff0000" stroke-width="1"/>
<rect x="805.5" y="230.5" width="185.0" height="45.0" fill="none" stroke="#00ff00" stroke-width="1"/>
<rect x="587.5" y="235.5" width="34.0" height="34.0" fill="none" stroke="#ffff00" stroke-width="1"/>
<rect x="594.5" y="242.5" width="20.0" height="20.0" fill="none" stroke="#ff00ff" stroke-width="1"/>
<rect x="651.5" y="235.5" width="34.0" height="34.0" fill="none" stroke="#ffff00" stroke-width="1"/>
<rect x="658.5" y="242.5" width="20.0" height="20.0" fill="none" stroke="#ff00ff" stroke-width="1"/>
<rect x="715.5" y="235.5" width="34.0" height="34.0" fill="none" stroke="#ffff00" stroke-width="1"/>
<rect x="722.5" y="242.5" width="20.0" height="20.0" fill="none" stroke="#ff00ff" stroke-width="1"/>
<rect x="814.5" y="235.5" width="34.0" height="34.0" fill="none" stroke="#ffff00" stroke-width="1"/>
<rect x="821.5" y="242.5" width="20.0" height="20.0" fill="none" stroke="#ff00ff" stroke-width="1"/>
<rect x="878.5" y="235.5" width="34.0" height="34.0" fill="none" stroke="#ffff00" stroke-width="1"/>
<rect x="885.5" y="242.5" width="20.0" height="20.0" fill="none" stroke="#ff00ff" stroke-width="1"/>
<rect x="942.5" y="235.5" width="34.0" height="34.0" fill="none" stroke="#ffff00" stroke-width="1"/>
<rect x="949.5" y="242.5" width="20.0" height="20.0" fill="none" stroke="#ff00ff" stroke-width="1"/>
<rect x="520.5" y="245.5" width="19.0" height="20.0" fill="none" stroke="#ffff00" stroke-width="1"/>
<rect x="545.5" y="245.5" width="19.0" height="19.0" fill="none" stroke="#808080" stroke-width="1"/>
<rect x="627.5" y="245.5" width="19.0" height="19.0" fill="none" stroke="#808080" stroke-width="1"/>
<rect x="691.5" y="245.5" width="19.0" height="19.0" fill="none" stroke="#808080" stroke-width="1"/>
<rect x="773.5" y="245.5" width="19.0" height="19.0" fill="none" stroke="#808080" stroke-width="1"/>
<rect x="855.5" y="245.5" width="19.0" height="19.0" fill="none" stroke="#808080" stroke-width="1"/>
<rect x="919.5" y="245.5" width="19.0" height="19.0" fill="none" stroke="#808080" stroke-width="1"/>
</g>
</svg>
<svg style="left:516px;top:314px" width="758" height="205.60000000000002" viewBox="516 314 758 205.60000000000002" shape-rendering="crispEdges">
<rect x="516" y="314" width="758" height="205.60000000000002" fill="#000"/>
<rect x="516" y="314" width="48" height="2" fill="#0b0b0b"/>
<rect x="516" y="316" width="48" height="2" fill="#0b0b0b"/>
<rect x="516" y="318" width="48" height="2" fill="#0b0b0b"/>
<rect x="516" y="320" width="48" height="2" fill="#0b0b0b"/>
<rect x="516" y="322" width="48" height="2" fill="#1c1c1e"/>
<rect x="516" y="324" width="48" height="2" fill="#1c1c1e"/>
<rect x="516" y="326" width="48" height="2" fill="#1c1c1e"/>
<rect x="516" y="328" width="48" height="2" fill="#1c1c1e"/>
<rect x="516" y="330" width="48" height="2" fill="#30353e"/>
<rect x="516" y="332" width="48" height="2" fill="#262b31"/>
<rect x="516" y="334" width="48" height="2" fill="#30353e"/>
<rect x="516" y="336" width="48" height="2" fill="#262b31"/>
<rect x="516" y="338" width="48" height="2" fill="#30353e"/>
<rect x="516" y="340" width="48" height="2" fill="#4b4f53"/>
<rect x="516" y="342" width="48" height="2" fill="#3c3f43"/>
<rect x="516" y="344" width="48" height="2" fill="#4b4f53"/>
<rect x="516" y="346" width="48" height="2" fill="#3c3f43"/>
<rect x="516" y="348" width="48" height="2" fill="#676767"/>
<rect x="516" y="350" width="48" height="2" fill="#525252"/>
<rect x="516" y="352" width="48" height="2" fill="#676767"/>
<rect x="516" y="354" width="48" height="2" fill="#525252"/>
<rect x="516" y="356" width="48" height="2" fill="#676767"/>
<rect x="516" y="358" width="48" height="2" fill="#525252"/>
<rect x="516" y="360" width="48" height="2" fill="#6b6b6b"/>
<rect x="516" y="362" width="48" height="2" fill="#565656"/>
<rect x="516" y="364" width="48" height="2" fill="#6b6b6b"/>
<rect x="516" y="366" width="48" height="2" fill="#75756f"/>
<rect x="516" y="368" width="48" height="2" fill="#5d5d59"/>
<rect x="516" y="370" width="48" height="2" fill="#75756f"/>
<rect x="516" y="372" width="48" height="2" fill="#5d5d59"/>
<rect x="516" y="374" width="48" height="2" fill="#75756f"/>
<rect x="516" y="376" width="48" height="2" fill="#5d5d59"/>
<rect x="516" y="378" width="48" height="2" fill="#75756f"/>
<rect x="516" y="380" width="48" height="2" fill="#5d5d59"/>
<rect x="516" y="382" width="48" height="2" fill="#75756f"/>
<rect x="516" y="384" width="48" height="2" fill="#676762"/>
<rect x="516" y="386" width="48" height="2" fill="#52524e"/>
<rect x="516" y="388" width="48" height="2" fill="#676762"/>
<rect x="516" y="390" width="48" height="2" fill="#52524e"/>
<rect x="516" y="392" width="48" height="2" fill="#595d54"/>
<rect x="516" y="394" width="48" height="2" fill="#474b43"/>
<rect x="516" y="396" width="48" height="2" fill="#595d54"/>
<rect x="516" y="398" width="48" height="2" fill="#474b43"/>
<rect x="516" y="400" width="48" height="2" fill="#464646"/>
<rect x="516" y="402" width="48" height="2" fill="#383838"/>
<rect x="516" y="404" width="48" height="2" fill="#464646"/>
<rect x="516" y="406" width="48" height="2" fill="#383838"/>
<rect x="516" y="408" width="48" height="2" fill="#2d2d2d"/>
<rect x="516" y="410" width="48" height="2" fill="#383838"/>
<rect x="516" y="412" width="48" height="2" fill="#2d2d2d"/>
<rect x="516" y="414" width="48" height="2" fill="#272727"/>
<rect x="516" y="416" width="48" height="2" fill="#1f1f1f"/>
<rect x="516" y="418" width="48" height="2" fill="#272727"/>
<rect x="516" y="420" width="48" height="2" fill="#171717"/>
<rect x="516" y="422" width="48" height="2" fill="#121212"/>
<rect x="564" y="314" width="38" height="2" fill="#0e0e0e"/>
<rect x="564" y="316" width="38" height="2" fill="#0e0e0e"/>
<rect x="564" y="318" width="38" height="2" fill="#0e0e0e"/>
<rect x="564" y="320" width="38" height="2" fill="#0e0e0e"/>
<rect x="564" y="322" width="38" height="2" fill="#212125"/>
<rect x="564" y="324" width="38" height="2" fill="#212125"/>
<rect x="564" y="326" width="38" height="2" fill="#212125"/>
<rect x="564" y="328" width="38" height="2" fill="#212125"/>
<rect x="564" y="330" width="38" height="2" fill="#3e454f"/>
<rect x="564" y="332" width="38" height="2" fill="#31373f"/>
<rect x="564" y="334" width="38" height="2" fill="#3e454f"/>
<rect x="564" y="336" width="38" height="2" fill="#31373f"/>
<rect x="564" y="338" width="38" height="2" fill="#3e454f"/>
<rect x="564" y="340" width="38" height="2" fill="#61666b"/>
<rect x="564" y="342" width="38" height="2" fill="#4d5155"/>
<rect x="564" y="344" width="38" height="2" fill="#61666b"/>
<rect x="564" y="346" width="38" height="2" fill="#4d5155"/>
<rect x="564" y="348" width="38" height="2" fill="#848484"/>
<rect x="564" y="350" width="38" height="2" fill="#696969"/>
<rect x="564" y="352" width="38" height="2" fill="#848484"/>
<rect x="564" y="354" width="38" height="2" fill="#696969"/>
<rect x="564" y="356" width="38" height="2" fill="#848484"/>
<rect x="564" y="358" width="38" height="2" fill="#696969"/>
<rect x="564" y="360" width="38" height="2" fill="#8a8a8a"/>
<rect x="564" y="362" width="38" height="2" fill="#6e6e6e"/>
<rect x="564" y="364" width="38" height="2" fill="#8a8a8a"/>
<rect x="564" y="366" width="38" height="2" fill="#96968e"/>
<rect x="564" y="368" width="38" height="2" fill="#787872"/>
<rect x="564" y="370" width="38" height="2" fill="#96968e"/>
<rect x="564" y="372" width="38" height="2" fill="#787872"/>
<rect x="564" y="374" width="38" height="2" fill="#96968e"/>
<rect x="564" y="376" width="38" height="2" fill="#787872"/>
<rect x="564" y="378" width="38" height="2" fill="#96968e"/>
<rect x="564" y="380" width="38" height="2" fill="#787872"/>
<rect x="564" y="382" width="38" height="2" fill="#96968e"/>
<rect x="564" y="384" width="38" height="2" fill="#84847d"/>
<rect x="564" y="386" width="38" height="2" fill="#696964"/>
<rect x="564" y="388" width="38" height="2" fill="#84847d"/>
<rect x="564" y="390" width="38" height="2" fill="#696964"/>
<rect x="564" y="392" width="38" height="2" fill="#72786c"/>
<rect x="564" y="394" width="38" height="2" fill="#5b6056"/>
<rect x="564" y="396" width="38" height="2" fill="#72786c"/>
<rect x="564" y="398" width="38" height="2" fill="#5b6056"/>
<rect x="564" y="400" width="38" height="2" fill="#5a5a5a"/>
<rect x="564" y="402" width="38" height="2" fill="#484848"/>
<rect x="564" y="404" width="38" height="2" fill="#5a5a5a"/>
<rect x="564" y="406" width="38" height="2" fill="#484848"/>
<rect x="564" y="408" width="38" height="2" fill="#393939"/>
<rect x="564" y="410" width="38" height="2" fill="#484848"/>
<rect x="564" y="412" width="38" height="2" fill="#393939"/>
<rect x="564" y="414" width="38" height="2" fill="#333333"/>
<rect x="564" y="416" width="38" height="2" fill="#282828"/>
<rect x="564" y="418" width="38" height="2" fill="#333333"/>
<rect x="564" y="420" width="38" height="2" fill="#1e1e1e"/>
<rect x="564" y="422" width="38" height="2" fill="#181818"/>
<rect x="602" y="314" width="73" height="2" fill="#090909"/>
<rect x="602" y="316" width="73" height="2" fill="#090909"/>
<rect x="602" y="318" width="73" height="2" fill="#090909"/>
<rect x="602" y="320" width="73" height="2" fill="#090909"/>
<rect x="602" y="322" width="73" height="2" fill="#17171a"/>
<rect x="602" y="324" width="73" height="2" fill="#17171a"/>
<rect x="602" y="326" width="73" height="2" fill="#17171a"/>
<rect x="602" y="328" width="73" height="2" fill="#17171a"/>
<rect x="602" y="330" width="73" height="2" fill="#292d34"/>
<rect x="602" y="332" width="73" height="2" fill="#20242a"/>
<rect x="602" y="334" width="73" height="2" fill="#292d34"/>
<rect x="602" y="336" width="73" height="2" fill="#20242a"/>
<rect x="602" y="338" width="73" height="2" fill="#292d34"/>
<rect x="602" y="340" width="73" height="2" fill="#404347"/>
<rect x="602" y="342" width="73" height="2" fill="#333638"/>
<rect x="602" y="344" width="73" height="2" fill="#404347"/>
<rect x="602" y="346" width="73" height="2" fill="#333638"/>
<rect x="602" y="348" width="73" height="2" fill="#575757"/>
<rect x="602" y="350" width="73" height="2" fill="#464646"/>
<rect x="602" y="352" width="73" height="2" fill="#575757"/>
<rect x="602" y="354" width="73" height="2" fill="#464646"/>
<rect x="602" y="356" width="73" height="2" fill="#575757"/>
<rect x="602" y="358" width="73" height="2" fill="#464646"/>
<rect x="602" y="360" width="73" height="2" fill="#5b5b5b"/>
<rect x="602" y="362" width="73" height="2" fill="#494949"/>
<rect x="602" y="364" width="73" height="2" fill="#5b5b5b"/>
<rect x="602" y="366" width="73" height="2" fill="#63635e"/>
<rect x="602" y="368" width="73" height="2" fill="#4f4f4b"/>
<rect x="602" y="370" width="73" height="2" fill="#63635e"/>
<rect x="602" y="372" width="73" height="2" fill="#4f4f4b"/>
<rect x="602" y="374" width="73" height="2" fill="#63635e"/>
<rect x="602" y="376" width="73" height="2" fill="#4f4f4b"/>
<rect x="602" y="378" width="73" height="2" fill="#63635e"/>
<rect x="602" y="380" width="73" height="2" fill="#4f4f4b"/>
<rect x="602" y="382" width="73" height="2" fill="#63635e"/>
<rect x="602" y="384" width="73" height="2" fill="#575753"/>
<rect x="602" y="386" width="73" height="2" fill="#464642"/>
<rect x="602" y="388" width="73" height="2" fill="#575753"/>
<rect x="602" y="390" width="73" height="2" fill="#464642"/>
<rect x="602" y="392" width="73" height="2" fill="#4b4f47"/>
<rect x="602" y="394" width="73" height="2" fill="#3c3f39"/>
<rect x="602" y="396" width="73" height="2" fill="#4b4f47"/>
<rect x="602" y="398" width="73" height="2" fill="#3c3f39"/>
<rect x="602" y="400" width="73" height="2" fill="#3b3b3b"/>
<rect x="602" y="402" width="73" height="2" fill="#2f2f2f"/>
<rect x="602" y="404" width="73" height="2" fill="#3b3b3b"/>
<rect x="602" y="406" width="73" height="2" fill="#2f2f2f"/>
<rect x="602" y="408" width="73" height="2" fill="#262626"/>
<rect x="602" y="410" width="73" height="2" fill="#2f2f2f"/>
<rect x="602" y="412" width="73" height="2" fill="#262626"/>
<rect x="602" y="414" width="73" height="2" fill="#212121"/>
<rect x="602" y="416" width="73" height="2" fill="#1b1b1b"/>
<rect x="602" y="418" width="73" height="2" fill="#212121"/>
<rect x="602" y="420" width="73" height="2" fill="#131313"/>
<rect x="602" y="422" width="73" height="2" fill="#0f0f0f"/>
<rect x="675" y="314" width="37" height="2" fill="#0c0c0c"/>
<rect x="675" y="316" width="37" height="2" fill="#0c0c0c"/>
<rect x="675" y="318" width="37" height="2" fill="#0c0c0c"/>
<rect x="675" y="320" width="37" height="2" fill="#0c0c0c"/>
<rect x="675" y="322" width="37" height="2" fill="#1d1d1f"/>
<rect x="675" y="324" width="37" height="2" fill="#1d1d1f"/>
<rect x="675" y="326" width="37" height="2" fill="#1d1d1f"/>
<rect x="675" y="328" width="37" height="2" fill="#1d1d1f"/>
<rect x="675" y="330" width="37" height="2" fill="#323740"/>
<rect x="675" y="332" width="37" height="2" fill="#282c33"/>
<rect x="675" y="334" width="37" height="2" fill="#323740"/>
<rect x="675" y="336" width="37" height="2" fill="#282c33"/>
<rect x="675" y="338" width="37" height="2" fill="#323740"/>
<rect x="675" y="340" width="37" height="2" fill="#4e5256"/>
<rect x="675" y="342" width="37" height="2" fill="#3e4145"/>
<rect x="675" y="344" width="37" height="2" fill="#4e5256"/>
<rect x="675" y="346" width="37" height="2" fill="#3e4145"/>
<rect x="675" y="348" width="37" height="2" fill="#6a6a6a"/>
<rect x="675" y="350" width="37" height="2" fill="#555555"/>
<rect x="675" y="352" width="37" height="2" fill="#6a6a6a"/>
<rect x="675" y="354" width="37" height="2" fill="#555555"/>
<rect x="675" y="356" width="37" height="2" fill="#6a6a6a"/>
<rect x="675" y="358" width="37" height="2" fill="#555555"/>
<rect x="675" y="360" width="37" height="2" fill="#6f6f6f"/>
<rect x="675" y="362" width="37" height="2" fill="#595959"/>
<rect x="675" y="364" width="37" height="2" fill="#6f6f6f"/>
<rect x="675" y="366" width="37" height="2" fill="#797973"/>
<rect x="675" y="368" width="37" height="2" fill="#60605c"/>
<rect x="675" y="370" width="37" height="2" fill="#797973"/>
<rect x="675" y="372" width="37" height="2" fill="#60605c"/>
<rect x="675" y="374" width="37" height="2" fill="#797973"/>
<rect x="675" y="376" width="37" height="2" fill="#60605c"/>
<rect x="675" y="378" width="37" height="2" fill="#797973"/>
<rect x="675" y="380" width="37" height="2" fill="#60605c"/>
<rect x="675" y="382" width="37" height="2" fill="#797973"/>
<rect x="675" y="384" width="37" height="2" fill="#6a6a65"/>
<rect x="675" y="386" width="37" height="2" fill="#555551"/>
<rect x="675" y="388" width="37" height="2" fill="#6a6a65"/>
<rect x="675" y="390" width="37" height="2" fill="#555551"/>
<rect x="675" y="392" width="37" height="2" fill="#5c6057"/>
<rect x="675" y="394" width="37" height="2" fill="#494d45"/>
<rect x="675" y="396" width="37" height="2" fill="#5c6057"/>
<rect x="675" y="398" width="37" height="2" fill="#494d45"/>
<rect x="675" y="400" width="37" height="2" fill="#484848"/>
<rect x="675" y="402" width="37" height="2" fill="#3a3a3a"/>
<rect x="675" y="404" width="37" height="2" fill="#484848"/>
<rect x="675" y="406" width="37" height="2" fill="#3a3a3a"/>
<rect x="675" y="408" width="37" height="2" fill="#2e2e2e"/>
<rect x="675" y="410" width="37" height="2" fill="#3a3a3a"/>
<rect x="675" y="412" width="37" height="2" fill="#2e2e2e"/>
<rect x="675" y="414" width="37" height="2" fill="#292929"/>
<rect x="675" y="416" width="37" height="2" fill="#202020"/>
<rect x="675" y="418" width="37" height="2" fill="#292929"/>
<rect x="675" y="420" width="37" height="2" fill="#181818"/>
<rect x="675" y="422" width="37" height="2" fill="#131313"/>
<rect x="712" y="314" width="75" height="2" fill="#0d0d0d"/>
<rect x="712" y="316" width="75" height="2" fill="#0d0d0d"/>
<rect x="712" y="318" width="75" height="2" fill="#0d0d0d"/>
<rect x="712" y="320" width="75" height="2" fill="#0d0d0d"/>
<rect x="712" y="322" width="75" height="2" fill="#1f1f22"/>
<rect x="712" y="324" width="75" height="2" fill="#1f1f22"/>
<rect x="712" y="326" width="75" height="2" fill="#1f1f22"/>
<rect x="712" y="328" width="75" height="2" fill="#1f1f22"/>
<rect x="712" y="330" width="75" height="2" fill="#353b44"/>
<rect x="712" y="332" width="75" height="2" fill="#2b2f37"/>
<rect x="712" y="334" width="75" height="2" fill="#353b44"/>
<rect x="712" y="336" width="75" height="2" fill="#2b2f37"/>
<rect x="712" y="338" width="75" height="2" fill="#353b44"/>
<rect x="712" y="340" width="75" height="2" fill="#54585c"/>
<rect x="712" y="342" width="75" height="2" fill="#43464a"/>
<rect x="712" y="344" width="75" height="2" fill="#54585c"/>
<rect x="712" y="346" width="75" height="2" fill="#43464a"/>
<rect x="712" y="348" width="75" height="2" fill="#727272"/>
<rect x="712" y="350" width="75" height="2" fill="#5b5b5b"/>
<rect x="712" y="352" width="75" height="2" fill="#727272"/>
<rect x="712" y="354" width="75" height="2" fill="#5b5b5b"/>
<rect x="712" y="356" width="75" height="2" fill="#727272"/>
<rect x="712" y="358" width="75" height="2" fill="#5b5b5b"/>
<rect x="712" y="360" width="75" height="2" fill="#777777"/>
<rect x="712" y="362" width="75" height="2" fill="#5f5f5f"/>
<rect x="712" y="364" width="75" height="2" fill="#777777"/>
<rect x="712" y="366" width="75" height="2" fill="#82827b"/>
<rect x="712" y="368" width="75" height="2" fill="#686862"/>
<rect x="712" y="370" width="75" height="2" fill="#82827b"/>
<rect x="712" y="372" width="75" height="2" fill="#686862"/>
<rect x="712" y="374" width="75" height="2" fill="#82827b"/>
<rect x="712" y="376" width="75" height="2" fill="#686862"/>
<rect x="712" y="378" width="75" height="2" fill="#82827b"/>
<rect x="712" y="380" width="75" height="2" fill="#686862"/>
<rect x="712" y="382" width="75" height="2" fill="#82827b"/>
<rect x="712" y="384" width="75" height="2" fill="#72726c"/>
<rect x="712" y="386" width="75" height="2" fill="#5b5b56"/>
<rect x="712" y="388" width="75" height="2" fill="#72726c"/>
<rect x="712" y="390" width="75" height="2" fill="#5b5b56"/>
<rect x="712" y="392" width="75" height="2" fill="#62685d"/>
<rect x="712" y="394" width="75" height="2" fill="#4f534a"/>
<rect x="712" y="396" width="75" height="2" fill="#62685d"/>
<rect x="712" y="398" width="75" height="2" fill="#4f534a"/>
<rect x="712" y="400" width="75" height="2" fill="#4e4e4e"/>
<rect x="712" y="402" width="75" height="2" fill="#3e3e3e"/>
<rect x="712" y="404" width="75" height="2" fill="#4e4e4e"/>
<rect x="712" y="406" width="75" height="2" fill="#3e3e3e"/>
<rect x="712" y="408" width="75" height="2" fill="#313131"/>
<rect x="712" y="410" width="75" height="2" fill="#3e3e3e"/>
<rect x="712" y="412" width="75" height="2" fill="#313131"/>
<rect x="712" y="414" width="75" height="2" fill="#2c2c2c"/>
<rect x="712" y="416" width="75" height="2" fill="#232323"/>
<rect x="712" y="418" width="75" height="2" fill="#2c2c2c"/>
<rect x="712" y="420" width="75" height="2" fill="#1a1a1a"/>
<rect x="712" y="422" width="75" height="2" fill="#141414"/>
<rect x="787" y="314" width="36" height="2" fill="#0e0e0e"/>
<rect x="787" y="316" width="36" height="2" fill="#0e0e0e"/>
<rect x="787" y="318" width="36" height="2" fill="#0e0e0e"/>
<rect x="787" y="320" width="36" height="2" fill="#0e0e0e"/>
<rect x="787" y="322" width="36" height="2" fill="#212125"/>
<rect x="787" y="324" width="36" height="2" fill="#212125"/>
<rect x="787" y="326" width="36" height="2" fill="#212125"/>
<rect x="787" y="328" width="36" height="2" fill="#212125"/>
<rect x="787" y="330" width="36" height="2" fill="#3f4650"/>
<rect x="787" y="332" width="36" height="2" fill="#323840"/>
<rect x="787" y="334" width="36" height="2" fill="#3f4650"/>
<rect x="787" y="336" width="36" height="2" fill="#323840"/>
<rect x="787" y="338" width="36" height="2" fill="#3f4650"/>
<rect x="787" y="340" width="36" height="2" fill="#62686d"/>
<rect x="787" y="342" width="36" height="2" fill="#4f5357"/>
<rect x="787" y="344" width="36" height="2" fill="#62686d"/>
<rect x="787" y="346" width="36" height="2" fill="#4f5357"/>
<rect x="787" y="348" width="36" height="2" fill="#868686"/>
<rect x="787" y="350" width="36" height="2" fill="#6b6b6b"/>
<rect x="787" y="352" width="36" height="2" fill="#868686"/>
<rect x="787" y="354" width="36" height="2" fill="#6b6b6b"/>
<rect x="787" y="356" width="36" height="2" fill="#868686"/>
<rect x="787" y="358" width="36" height="2" fill="#6b6b6b"/>
<rect x="787" y="360" width="36" height="2" fill="#8c8c8c"/>
<rect x="787" y="362" width="36" height="2" fill="#707070"/>
<rect x="787" y="364" width="36" height="2" fill="#8c8c8c"/>
<rect x="787" y="366" width="36" height="2" fill="#999991"/>
<rect x="787" y="368" width="36" height="2" fill="#7a7a74"/>
<rect x="787" y="370" width="36" height="2" fill="#999991"/>
<rect x="787" y="372" width="36" height="2" fill="#7a7a74"/>
<rect x="787" y="374" width="36" height="2" fill="#999991"/>
<rect x="787" y="376" width="36" height="2" fill="#7a7a74"/>
<rect x="787" y="378" width="36" height="2" fill="#999991"/>
<rect x="787" y="380" width="36" height="2" fill="#7a7a74"/>
<rect x="787" y="382" width="36" height="2" fill="#999991"/>
<rect x="787" y="384" width="36" height="2" fill="#86867f"/>
<rect x="787" y="386" width="36" height="2" fill="#6b6b66"/>
<rect x="787" y="388" width="36" height="2" fill="#86867f"/>
<rect x="787" y="390" width="36" height="2" fill="#6b6b66"/>
<rect x="787" y="392" width="36" height="2" fill="#747a6e"/>
<rect x="787" y="394" width="36" height="2" fill="#5d6158"/>
<rect x="787" y="396" width="36" height="2" fill="#747a6e"/>
<rect x="787" y="398" width="36" height="2" fill="#5d6158"/>
<rect x="787" y="400" width="36" height="2" fill="#5b5b5b"/>
<rect x="787" y="402" width="36" height="2" fill="#494949"/>
<rect x="787" y="404" width="36" height="2" fill="#5b5b5b"/>
<rect x="787" y="406" width="36" height="2" fill="#494949"/>
<rect x="787" y="408" width="36" height="2" fill="#3a3a3a"/>
<rect x="787" y="410" width="36" height="2" fill="#494949"/>
<rect x="787" y="412" width="36" height="2" fill="#3a3a3a"/>
<rect x="787" y="414" width="36" height="2" fill="#343434"/>
<rect x="787" y="416" width="36" height="2" fill="#292929"/>
<rect x="787" y="418" width="36" height="2" fill="#343434"/>
<rect x="787" y="420" width="36" height="2" fill="#1e1e1e"/>
<rect x="787" y="422" width="36" height="2" fill="#181818"/>
<rect x="823" y="314" width="38" height="2" fill="#0c0c0c"/>
<rect x="823" y="316" width="38" height="2" fill="#0c0c0c"/>
<rect x="823" y="318" width="38" height="2" fill="#0c0c0c"/>
<rect x="823" y="320" width="38" height="2" fill="#0c0c0c"/>
<rect x="823" y="322" width="38" height="2" fill="#1d1d1f"/>
<rect x="823" y="324" width="38" height="2" fill="#1d1d1f"/>
<rect x="823" y="326" width="38" height="2" fill="#1d1d1f"/>
<rect x="823" y="328" width="38" height="2" fill="#1d1d1f"/>
<rect x="823" y="330" width="38" height="2" fill="#323740"/>
<rect x="823" y="332" width="38" height="2" fill="#282c33"/>
<rect x="823" y="334" width="38" height="2" fill="#323740"/>
<rect x="823" y="336" width="38" height="2" fill="#282c33"/>
<rect x="823" y="338" width="38" height="2" fill="#323740"/>
<rect x="823" y="340" width="38" height="2" fill="#4e5256"/>
<rect x="823" y="342" width="38" height="2" fill="#3e4145"/>
<rect x="823" y="344" width="38" height="2" fill="#4e5256"/>
<rect x="823" y="346" width="38" height="2" fill="#3e4145"/>
<rect x="823" y="348" width="38" height="2" fill="#6a6a6a"/>
<rect x="823" y="350" width="38" height="2" fill="#555555"/>
<rect x="823" y="352" width="38" height="2" fill="#6a6a6a"/>
<rect x="823" y="354" width="38" height="2" fill="#555555"/>
<rect x="823" y="356" width="38" height="2" fill="#6a6a6a"/>
<rect x="823" y="358" width="38" height="2" fill="#555555"/>
<rect x="823" y="360" width="38" height="2" fill="#6f6f6f"/>
<rect x="823" y="362" width="38" height="2" fill="#595959"/>
<rect x="823" y="364" width="38" height="2" fill="#6f6f6f"/>
<rect x="823" y="366" width="38" height="2" fill="#797973"/>
<rect x="823" y="368" width="38" height="2" fill="#60605c"/>
<rect x="823" y="370" width="38" height="2" fill="#797973"/>
<rect x="823" y="372" width="38" height="2" fill="#60605c"/>
<rect x="823" y="374" width="38" height="2" fill="#797973"/>
<rect x="823" y="376" width="38" height="2" fill="#60605c"/>
<rect x="823" y="378" width="38" height="2" fill="#797973"/>
<rect x="823" y="380" width="38" height="2" fill="#60605c"/>
<rect x="823" y="382" width="38" height="2" fill="#797973"/>
<rect x="823" y="384" width="38" height="2" fill="#6a6a65"/>
<rect x="823" y="386" width="38" height="2" fill="#555551"/>
<rect x="823" y="388" width="38" height="2" fill="#6a6a65"/>
<rect x="823" y="390" width="38" height="2" fill="#555551"/>
<rect x="823" y="392" width="38" height="2" fill="#5c6057"/>
<rect x="823" y="394" width="38" height="2" fill="#494d45"/>
<rect x="823" y="396" width="38" height="2" fill="#5c6057"/>
<rect x="823" y="398" width="38" height="2" fill="#494d45"/>
<rect x="823" y="400" width="38" height="2" fill="#484848"/>
<rect x="823" y="402" width="38" height="2" fill="#3a3a3a"/>
<rect x="823" y="404" width="38" height="2" fill="#484848"/>
<rect x="823" y="406" width="38" height="2" fill="#3a3a3a"/>
<rect x="823" y="408" width="38" height="2" fill="#2e2e2e"/>
<rect x="823" y="410" width="38" height="2" fill="#3a3a3a"/>
<rect x="823" y="412" width="38" height="2" fill="#2e2e2e"/>
<rect x="823" y="414" width="38" height="2" fill="#292929"/>
<rect x="823" y="416" width="38" height="2" fill="#202020"/>
<rect x="823" y="418" width="38" height="2" fill="#292929"/>
<rect x="823" y="420" width="38" height="2" fill="#181818"/>
<rect x="823" y="422" width="38" height="2" fill="#131313"/>
<rect x="861" y="314" width="38" height="2" fill="#0e0e0e"/>
<rect x="861" y="316" width="38" height="2" fill="#0e0e0e"/>
<rect x="861" y="318" width="38" height="2" fill="#0e0e0e"/>
<rect x="861" y="320" width="38" height="2" fill="#0e0e0e"/>
<rect x="861" y="322" width="38" height="2" fill="#212125"/>
<rect x="861" y="324" width="38" height="2" fill="#212125"/>
<rect x="861" y="326" width="38" height="2" fill="#212125"/>
<rect x="861" y="328" width="38" height="2" fill="#212125"/>
<rect x="861" y="330" width="38" height="2" fill="#414954"/>
<rect x="861" y="332" width="38" height="2" fill="#343a43"/>
<rect x="861" y="334" width="38" height="2" fill="#414954"/>
<rect x="861" y="336" width="38" height="2" fill="#343a43"/>
<rect x="861" y="338" width="38" height="2" fill="#414954"/>
<rect x="861" y="340" width="38" height="2" fill="#666c71"/>
<rect x="861" y="342" width="38" height="2" fill="#52565b"/>
<rect x="861" y="344" width="38" height="2" fill="#666c71"/>
<rect x="861" y="346" width="38" height="2" fill="#52565b"/>
<rect x="861" y="348" width="38" height="2" fill="#8c8c8c"/>
<rect x="861" y="350" width="38" height="2" fill="#707070"/>
<rect x="861" y="352" width="38" height="2" fill="#8c8c8c"/>
<rect x="861" y="354" width="38" height="2" fill="#707070"/>
<rect x="861" y="356" width="38" height="2" fill="#8c8c8c"/>
<rect x="861" y="358" width="38" height="2" fill="#707070"/>
<rect x="861" y="360" width="38" height="2" fill="#929292"/>
<rect x="861" y="362" width="38" height="2" fill="#757575"/>
<rect x="861" y="364" width="38" height="2" fill="#929292"/>
<rect x="861" y="366" width="38" height="2" fill="#9f9f97"/>
<rect x="861" y="368" width="38" height="2" fill="#7f7f79"/>
<rect x="861" y="370" width="38" height="2" fill="#9f9f97"/>
<rect x="861" y="372" width="38" height="2" fill="#7f7f79"/>
<rect x="861" y="374" width="38" height="2" fill="#9f9f97"/>
<rect x="861" y="376" width="38" height="2" fill="#7f7f79"/>
<rect x="861" y="378" width="38" height="2" fill="#9f9f97"/>
<rect x="861" y="380" width="38" height="2" fill="#7f7f79"/>
<rect x="861" y="382" width="38" height="2" fill="#9f9f97"/>
<rect x="861" y="384" width="38" height="2" fill="#8c8c85"/>
<rect x="861" y="386" width="38" height="2" fill="#70706a"/>
<rect x="861" y="388" width="38" height="2" fill="#8c8c85"/>
<rect x="861" y="390" width="38" height="2" fill="#70706a"/>
<rect x="861" y="392" width="38" height="2" fill="#797f72"/>
<rect x="861" y="394" width="38" height="2" fill="#60665b"/>
<rect x="861" y="396" width="38" height="2" fill="#797f72"/>
<rect x="861" y="398" width="38" height="2" fill="#60665b"/>
<rect x="861" y="400" width="38" height="2" fill="#5f5f5f"/>
<rect x="861" y="402" width="38" height="2" fill="#4c4c4c"/>
<rect x="861" y="404" width="38" height="2" fill="#5f5f5f"/>
<rect x="861" y="406" width="38" height="2" fill="#4c4c4c"/>
<rect x="861" y="408" width="38" height="2" fill="#3d3d3d"/>
<rect x="861" y="410" width="38" height="2" fill="#4c4c4c"/>
<rect x="861" y="412" width="38" height="2" fill="#3d3d3d"/>
<rect x="861" y="414" width="38" height="2" fill="#363636"/>
<rect x="861" y="416" width="38" height="2" fill="#2b2b2b"/>
<rect x="861" y="418" width="38" height="2" fill="#363636"/>
<rect x="861" y="420" width="38" height="2" fill="#1f1f1f"/>
<rect x="861" y="422" width="38" height="2" fill="#191919"/>
<rect x="899" y="314" width="38" height="2" fill="#0e0e0e"/>
<rect x="899" y="316" width="38" height="2" fill="#0e0e0e"/>
<rect x="899" y="318" width="38" height="2" fill="#0e0e0e"/>
<rect x="899" y="320" width="38" height="2" fill="#0e0e0e"/>
<rect x="899" y="322" width="38" height="2" fill="#212125"/>
<rect x="899" y="324" width="38" height="2" fill="#212125"/>
<rect x="899" y="326" width="38" height="2" fill="#212125"/>
<rect x="899" y="328" width="38" height="2" fill="#212125"/>
<rect x="899" y="330" width="38" height="2" fill="#4c5561"/>
<rect x="899" y="332" width="38" height="2" fill="#3d444e"/>
<rect x="899" y="334" width="38" height="2" fill="#4c5561"/>
<rect x="899" y="336" width="38" height="2" fill="#3d444e"/>
<rect x="899" y="338" width="38" height="2" fill="#4c5561"/>
<rect x="899" y="340" width="38" height="2" fill="#777d84"/>
<rect x="899" y="342" width="38" height="2" fill="#5f6469"/>
<rect x="899" y="344" width="38" height="2" fill="#777d84"/>
<rect x="899" y="346" width="38" height="2" fill="#5f6469"/>
<rect x="899" y="348" width="38" height="2" fill="#a2a2a2"/>
<rect x="899" y="350" width="38" height="2" fill="#828282"/>
<rect x="899" y="352" width="38" height="2" fill="#a2a2a2"/>
<rect x="899" y="354" width="38" height="2" fill="#828282"/>
<rect x="899" y="356" width="38" height="2" fill="#a2a2a2"/>
<rect x="899" y="358" width="38" height="2" fill="#828282"/>
<rect x="899" y="360" width="38" height="2" fill="#aaaaaa"/>
<rect x="899" y="362" width="38" height="2" fill="#888888"/>
<rect x="899" y="364" width="38" height="2" fill="#aaaaaa"/>
<rect x="899" y="366" width="38" height="2" fill="#b8b8af"/>
<rect x="899" y="368" width="38" height="2" fill="#93938c"/>
<rect x="899" y="370" width="38" height="2" fill="#b8b8af"/>
<rect x="899" y="372" width="38" height="2" fill="#93938c"/>
<rect x="899" y="374" width="38" height="2" fill="#b8b8af"/>
<rect x="899" y="376" width="38" height="2" fill="#93938c"/>
<rect x="899" y="378" width="38" height="2" fill="#b8b8af"/>
<rect x="899" y="380" width="38" height="2" fill="#93938c"/>
<rect x="899" y="382" width="38" height="2" fill="#b8b8af"/>
<rect x="899" y="384" width="38" height="2" fill="#a2a29a"/>
<rect x="899" y="386" width="38" height="2" fill="#82827b"/>
<rect x="899" y="388" width="38" height="2" fill="#a2a29a"/>
<rect x="899" y="390" width="38" height="2" fill="#82827b"/>
<rect x="899" y="392" width="38" height="2" fill="#8c9385"/>
<rect x="899" y="394" width="38" height="2" fill="#70766a"/>
<rect x="899" y="396" width="38" height="2" fill="#8c9385"/>
<rect x="899" y="398" width="38" height="2" fill="#70766a"/>
<rect x="899" y="400" width="38" height="2" fill="#6e6e6e"/>
<rect x="899" y="402" width="38" height="2" fill="#585858"/>
<rect x="899" y="404" width="38" height="2" fill="#6e6e6e"/>
<rect x="899" y="406" width="38" height="2" fill="#585858"/>
<rect x="899" y="408" width="38" height="2" fill="#464646"/>
<rect x="899" y="410" width="38" height="2" fill="#585858"/>
<rect x="899" y="412" width="38" height="2" fill="#464646"/>
<rect x="899" y="414" width="38" height="2" fill="#3e3e3e"/>
<rect x="899" y="416" width="38" height="2" fill="#323232"/>
<rect x="899" y="418" width="38" height="2" fill="#3e3e3e"/>
<rect x="899" y="420" width="38" height="2" fill="#242424"/>
<rect x="899" y="422" width="38" height="2" fill="#1d1d1d"/>
<rect x="937" y="314" width="37" height="2" fill="#0e0e0e"/>
<rect x="937" y="316" width="37" height="2" fill="#0e0e0e"/>
<rect x="937" y="318" width="37" height="2" fill="#0e0e0e"/>
<rect x="937" y="320" width="37" height="2" fill="#0e0e0e"/>
<rect x="937" y="322" width="37" height="2" fill="#212125"/>
<rect x="937" y="324" width="37" height="2" fill="#212125"/>
<rect x="937" y="326" width="37" height="2" fill="#212125"/>
<rect x="937" y="328" width="37" height="2" fill="#212125"/>
<rect x="937" y="330" width="37" height="2" fill="#48505d"/>
<rect x="937" y="332" width="37" height="2" fill="#3a404a"/>
<rect x="937" y="334" width="37" height="2" fill="#48505d"/>
<rect x="937" y="336" width="37" height="2" fill="#3a404a"/>
<rect x="937" y="338" width="37" height="2" fill="#48505d"/>
<rect x="937" y="340" width="37" height="2" fill="#71777d"/>
<rect x="937" y="342" width="37" height="2" fill="#5a5f64"/>
<rect x="937" y="344" width="37" height="2" fill="#71777d"/>
<rect x="937" y="346" width="37" height="2" fill="#5a5f64"/>
<rect x="937" y="348" width="37" height="2" fill="#9a9a9a"/>
<rect x="937" y="350" width="37" height="2" fill="#7b7b7b"/>
<rect x="937" y="352" width="37" height="2" fill="#9a9a9a"/>
<rect x="937" y="354" width="37" height="2" fill="#7b7b7b"/>
<rect x="937" y="356" width="37" height="2" fill="#9a9a9a"/>
<rect x="937" y="358" width="37" height="2" fill="#7b7b7b"/>
<rect x="937" y="360" width="37" height="2" fill="#a1a1a1"/>
<rect x="937" y="362" width="37" height="2" fill="#818181"/>
<rect x="937" y="364" width="37" height="2" fill="#a1a1a1"/>
<rect x="937" y="366" width="37" height="2" fill="#afafa7"/>
<rect x="937" y="368" width="37" height="2" fill="#8c8c85"/>
<rect x="937" y="370" width="37" height="2" fill="#afafa7"/>
<rect x="937" y="372" width="37" height="2" fill="#8c8c85"/>
<rect x="937" y="374" width="37" height="2" fill="#afafa7"/>
<rect x="937" y="376" width="37" height="2" fill="#8c8c85"/>
<rect x="937" y="378" width="37" height="2" fill="#afafa7"/>
<rect x="937" y="380" width="37" height="2" fill="#8c8c85"/>
<rect x="937" y="382" width="37" height="2" fill="#afafa7"/>
<rect x="937" y="384" width="37" height="2" fill="#9a9a93"/>
<rect x="937" y="386" width="37" height="2" fill="#7b7b75"/>
<rect x="937" y="388" width="37" height="2" fill="#9a9a93"/>
<rect x="937" y="390" width="37" height="2" fill="#7b7b75"/>
<rect x="937" y="392" width="37" height="2" fill="#858c7e"/>
<rect x="937" y="394" width="37" height="2" fill="#6a7065"/>
<rect x="937" y="396" width="37" height="2" fill="#858c7e"/>
<rect x="937" y="398" width="37" height="2" fill="#6a7065"/>
<rect x="937" y="400" width="37" height="2" fill="#696969"/>
<rect x="937" y="402" width="37" height="2" fill="#545454"/>
<rect x="937" y="404" width="37" height="2" fill="#696969"/>
<rect x="937" y="406" width="37" height="2" fill="#545454"/>
<rect x="937" y="408" width="37" height="2" fill="#434343"/>
<rect x="937" y="410" width="37" height="2" fill="#545454"/>
<rect x="937" y="412" width="37" height="2" fill="#434343"/>
<rect x="937" y="414" width="37" height="2" fill="#3b3b3b"/>
<rect x="937" y="416" width="37" height="2" fill="#2f2f2f"/>
<rect x="937" y="418" width="37" height="2" fill="#3b3b3b"/>
<rect x="937" y="420" width="37" height="2" fill="#232323"/>
<rect x="937" y="422" width="37" height="2" fill="#1c1c1c"/>
<rect x="974" y="314" width="36" height="2" fill="#050505"/>
<rect x="974" y="316" width="36" height="2" fill="#050505"/>
<rect x="974" y="318" width="36" height="2" fill="#050505"/>
<rect x="974" y="320" width="36" height="2" fill="#050505"/>
<rect x="974" y="322" width="36" height="2" fill="#0c0c0e"/>
<rect x="974" y="324" width="36" height="2" fill="#0c0c0e"/>
<rect x="974" y="326" width="36" height="2" fill="#0c0c0e"/>
<rect x="974" y="328" width="36" height="2" fill="#0c0c0e"/>
<rect x="974" y="330" width="36" height="2" fill="#16181c"/>
<rect x="974" y="332" width="36" height="2" fill="#111316"/>
<rect x="974" y="334" width="36" height="2" fill="#16181c"/>
<rect x="974" y="336" width="36" height="2" fill="#111316"/>
<rect x="974" y="338" width="36" height="2" fill="#16181c"/>
<rect x="974" y="340" width="36" height="2" fill="#222426"/>
<rect x="974" y="342" width="36" height="2" fill="#1b1d1e"/>
<rect x="974" y="344" width="36" height="2" fill="#222426"/>
<rect x="974" y="346" width="36" height="2" fill="#1b1d1e"/>
<rect x="974" y="348" width="36" height="2" fill="#2f2f2f"/>
<rect x="974" y="350" width="36" height="2" fill="#252525"/>
<rect x="974" y="352" width="36" height="2" fill="#2f2f2f"/>
<rect x="974" y="354" width="36" height="2" fill="#252525"/>
<rect x="974" y="356" width="36" height="2" fill="#2f2f2f"/>
<rect x="974" y="358" width="36" height="2" fill="#252525"/>
<rect x="974" y="360" width="36" height="2" fill="#313131"/>
<rect x="974" y="362" width="36" height="2" fill="#272727"/>
<rect x="974" y="364" width="36" height="2" fill="#313131"/>
<rect x="974" y="366" width="36" height="2" fill="#353532"/>
<rect x="974" y="368" width="36" height="2" fill="#2a2a28"/>
<rect x="974" y="370" width="36" height="2" fill="#353532"/>
<rect x="974" y="372" width="36" height="2" fill="#2a2a28"/>
<rect x="974" y="374" width="36" height="2" fill="#353532"/>
<rect x="974" y="376" width="36" height="2" fill="#2a2a28"/>
<rect x="974" y="378" width="36" height="2" fill="#353532"/>
<rect x="974" y="380" width="36" height="2" fill="#2a2a28"/>
<rect x="974" y="382" width="36" height="2" fill="#353532"/>
<rect x="974" y="384" width="36" height="2" fill="#2f2f2c"/>
<rect x="974" y="386" width="36" height="2" fill="#252523"/>
<rect x="974" y="388" width="36" height="2" fill="#2f2f2c"/>
<rect x="974" y="390" width="36" height="2" fill="#252523"/>
<rect x="974" y="392" width="36" height="2" fill="#282a26"/>
<rect x="974" y="394" width="36" height="2" fill="#20221e"/>
<rect x="974" y="396" width="36" height="2" fill="#282a26"/>
<rect x="974" y="398" width="36" height="2" fill="#20221e"/>
<rect x="974" y="400" width="36" height="2" fill="#202020"/>
<rect x="974" y="402" width="36" height="2" fill="#191919"/>
<rect x="974" y="404" width="36" height="2" fill="#202020"/>
<rect x="974" y="406" width="36" height="2" fill="#191919"/>
<rect x="974" y="408" width="36" height="2" fill="#141414"/>
<rect x="974" y="410" width="36" height="2" fill="#191919"/>
<rect x="974" y="412" width="36" height="2" fill="#141414"/>
<rect x="974" y="414" width="36" height="2" fill="#121212"/>
<rect x="974" y="416" width="36" height="2" fill="#0e0e0e"/>
<rect x="974" y="418" width="36" height="2" fill="#121212"/>
<rect x="974" y="420" width="36" height="2" fill="#0a0a0a"/>
<rect x="974" y="422" width="36" height="2" fill="#080808"/>
<rect x="1010" y="314" width="40" height="2" fill="#030303"/>
<rect x="1010" y="316" width="40" height="2" fill="#030303"/>
<rect x="1010" y="318" width="40" height="2" fill="#030303"/>
<rect x="1010" y="320" width="40" height="2" fill="#030303"/>
<rect x="1010" y="322" width="40" height="2" fill="#09090a"/>
<rect x="1010" y="324" width="40" height="2" fill="#09090a"/>
<rect x="1010" y="326" width="40" height="2" fill="#09090a"/>
<rect x="1010" y="328" width="40" height="2" fill="#09090a"/>
<rect x="1010" y="330" width="40" height="2" fill="#0f1114"/>
<rect x="1010" y="332" width="40" height="2" fill="#0c0e10"/>
<rect x="1010" y="334" width="40" height="2" fill="#0f1114"/>
<rect x="1010" y="336" width="40" height="2" fill="#0c0e10"/>
<rect x="1010" y="338" width="40" height="2" fill="#0f1114"/>
<rect x="1010" y="340" width="40" height="2" fill="#181a1b"/>
<rect x="1010" y="342" width="40" height="2" fill="#131415"/>
<rect x="1010" y="344" width="40" height="2" fill="#181a1b"/>
<rect x="1010" y="346" width="40" height="2" fill="#131415"/>
<rect x="1010" y="348" width="40" height="2" fill="#212121"/>
<rect x="1010" y="350" width="40" height="2" fill="#1a1a1a"/>
<rect x="1010" y="352" width="40" height="2" fill="#212121"/>
<rect x="1010" y="354" width="40" height="2" fill="#1a1a1a"/>
<rect x="1010" y="356" width="40" height="2" fill="#212121"/>
<rect x="1010" y="358" width="40" height="2" fill="#1a1a1a"/>
<rect x="1010" y="360" width="40" height="2" fill="#232323"/>
<rect x="1010" y="362" width="40" height="2" fill="#1c1c1c"/>
<rect x="1010" y="364" width="40" height="2" fill="#232323"/>
<rect x="1010" y="366" width="40" height="2" fill="#262624"/>
<rect x="1010" y="368" width="40" height="2" fill="#1e1e1d"/>
<rect x="1010" y="370" width="40" height="2" fill="#262624"/>
<rect x="1010" y="372" width="40" height="2" fill="#1e1e1d"/>
<rect x="1010" y="374" width="40" height="2" fill="#262624"/>
<rect x="1010" y="376" width="40" height="2" fill="#1e1e1d"/>
<rect x="1010" y="378" width="40" height="2" fill="#262624"/>
<rect x="1010" y="380" width="40" height="2" fill="#1e1e1d"/>
<rect x="1010" y="382" width="40" height="2" fill="#262624"/>
<rect x="1010" y="384" width="40" height="2" fill="#21211f"/>
<rect x="1010" y="386" width="40" height="2" fill="#1a1a19"/>
<rect x="1010" y="388" width="40" height="2" fill="#21211f"/>
<rect x="1010" y="390" width="40" height="2" fill="#1a1a19"/>
<rect x="1010" y="392" width="40" height="2" fill="#1d1e1b"/>
<rect x="1010" y="394" width="40" height="2" fill="#171816"/>
<rect x="1010" y="396" width="40" height="2" fill="#1d1e1b"/>
<rect x="1010" y="398" width="40" height="2" fill="#171816"/>
<rect x="1010" y="400" width="40" height="2" fill="#161616"/>
<rect x="1010" y="402" width="40" height="2" fill="#121212"/>
<rect x="1010" y="404" width="40" height="2" fill="#161616"/>
<rect x="1010" y="406" width="40" height="2" fill="#121212"/>
<rect x="1010" y="408" width="40" height="2" fill="#0e0e0e"/>
<rect x="1010" y="410" width="40" height="2" fill="#121212"/>
<rect x="1010" y="412" width="40" height="2" fill="#0e0e0e"/>
<rect x="1010" y="414" width="40" height="2" fill="#0d0d0d"/>
<rect x="1010" y="416" width="40" height="2" fill="#0a0a0a"/>
<rect x="1010" y="418" width="40" height="2" fill="#0d0d0d"/>
<rect x="1010" y="420" width="40" height="2" fill="#070707"/>
<rect x="1010" y="422" width="40" height="2" fill="#060606"/>
<rect x="1050" y="314" width="35" height="2" fill="#030303"/>
<rect x="1050" y="316" width="35" height="2" fill="#030303"/>
<rect x="1050" y="318" width="35" height="2" fill="#030303"/>
<rect x="1050" y="320" width="35" height="2" fill="#030303"/>
<rect x="1050" y="322" width="35" height="2" fill="#070708"/>
<rect x="1050" y="324" width="35" height="2" fill="#070708"/>
<rect x="1050" y="326" width="35" height="2" fill="#070708"/>
<rect x="1050" y="328" width="35" height="2" fill="#070708"/>
<rect x="1050" y="330" width="35" height="2" fill="#0c0e10"/>
<rect x="1050" y="332" width="35" height="2" fill="#0a0b0c"/>
<rect x="1050" y="334" width="35" height="2" fill="#0c0e10"/>
<rect x="1050" y="336" width="35" height="2" fill="#0a0b0c"/>
<rect x="1050" y="338" width="35" height="2" fill="#0c0e10"/>
<rect x="1050" y="340" width="35" height="2" fill="#131415"/>
<rect x="1050" y="342" width="35" height="2" fill="#0f1011"/>
<rect x="1050" y="344" width="35" height="2" fill="#131415"/>
<rect x="1050" y="346" width="35" height="2" fill="#0f1011"/>
<rect x="1050" y="348" width="35" height="2" fill="#1a1a1a"/>
<rect x="1050" y="350" width="35" height="2" fill="#151515"/>
<rect x="1050" y="352" width="35" height="2" fill="#1a1a1a"/>
<rect x="1050" y="354" width="35" height="2" fill="#151515"/>
<rect x="1050" y="356" width="35" height="2" fill="#1a1a1a"/>
<rect x="1050" y="358" width="35" height="2" fill="#151515"/>
<rect x="1050" y="360" width="35" height="2" fill="#1c1c1c"/>
<rect x="1050" y="362" width="35" height="2" fill="#161616"/>
<rect x="1050" y="364" width="35" height="2" fill="#1c1c1c"/>
<rect x="1050" y="366" width="35" height="2" fill="#1e1e1d"/>
<rect x="1050" y="368" width="35" height="2" fill="#181817"/>
<rect x="1050" y="370" width="35" height="2" fill="#1e1e1d"/>
<rect x="1050" y="372" width="35" height="2" fill="#181817"/>
<rect x="1050" y="374" width="35" height="2" fill="#1e1e1d"/>
<rect x="1050" y="376" width="35" height="2" fill="#181817"/>
<rect x="1050" y="378" width="35" height="2" fill="#1e1e1d"/>
<rect x="1050" y="380" width="35" height="2" fill="#181817"/>
<rect x="1050" y="382" width="35" height="2" fill="#1e1e1d"/>
<rect x="1050" y="384" width="35" height="2" fill="#1a1a19"/>
<rect x="1050" y="386" width="35" height="2" fill="#151514"/>
<rect x="1050" y="388" width="35" height="2" fill="#1a1a19"/>
<rect x="1050" y="390" width="35" height="2" fill="#151514"/>
<rect x="1050" y="392" width="35" height="2" fill="#171816"/>
<rect x="1050" y="394" width="35" height="2" fill="#121311"/>
<rect x="1050" y="396" width="35" height="2" fill="#171816"/>
<rect x="1050" y="398" width="35" height="2" fill="#121311"/>
<rect x="1050" y="400" width="35" height="2" fill="#121212"/>
<rect x="1050" y="402" width="35" height="2" fill="#0e0e0e"/>
<rect x="1050" y="404" width="35" height="2" fill="#121212"/>
<rect x="1050" y="406" width="35" height="2" fill="#0e0e0e"/>
<rect x="1050" y="408" width="35" height="2" fill="#0b0b0b"/>
<rect x="1050" y="410" width="35" height="2" fill="#0e0e0e"/>
<rect x="1050" y="412" width="35" height="2" fill="#0b0b0b"/>
<rect x="1050" y="414" width="35" height="2" fill="#0a0a0a"/>
<rect x="1050" y="416" width="35" height="2" fill="#080808"/>
<rect x="1050" y="418" width="35" height="2" fill="#0a0a0a"/>
<rect x="1050" y="420" width="35" height="2" fill="#060606"/>
<rect x="1050" y="422" width="35" height="2" fill="#040404"/>
<rect x="1085" y="314" width="37" height="2" fill="#020202"/>
<rect x="1085" y="316" width="37" height="2" fill="#020202"/>
<rect x="1085" y="318" width="37" height="2" fill="#020202"/>
<rect x="1085" y="320" width="37" height="2" fill="#020202"/>
<rect x="1085" y="322" width="37" height="2" fill="#060606"/>
<rect x="1085" y="324" width="37" height="2" fill="#060606"/>
<rect x="1085" y="326" width="37" height="2" fill="#060606"/>
<rect x="1085" y="328" width="37" height="2" fill="#060606"/>
<rect x="1085" y="330" width="37" height="2" fill="#0a0b0d"/>
<rect x="1085" y="332" width="37" height="2" fill="#08090a"/>
<rect x="1085" y="334" width="37" height="2" fill="#0a0b0d"/>
<rect x="1085" y="336" width="37" height="2" fill="#08090a"/>
<rect x="1085" y="338" width="37" height="2" fill="#0a0b0d"/>
<rect x="1085" y="340" width="37" height="2" fill="#101112"/>
<rect x="1085" y="342" width="37" height="2" fill="#0d0d0e"/>
<rect x="1085" y="344" width="37" height="2" fill="#101112"/>
<rect x="1085" y="346" width="37" height="2" fill="#0d0d0e"/>
<rect x="1085" y="348" width="37" height="2" fill="#161616"/>
<rect x="1085" y="350" width="37" height="2" fill="#111111"/>
<rect x="1085" y="352" width="37" height="2" fill="#161616"/>
<rect x="1085" y="354" width="37" height="2" fill="#111111"/>
<rect x="1085" y="356" width="37" height="2" fill="#161616"/>
<rect x="1085" y="358" width="37" height="2" fill="#111111"/>
<rect x="1085" y="360" width="37" height="2" fill="#171717"/>
<rect x="1085" y="362" width="37" height="2" fill="#121212"/>
<rect x="1085" y="364" width="37" height="2" fill="#171717"/>
<rect x="1085" y="366" width="37" height="2" fill="#191918"/>
<rect x="1085" y="368" width="37" height="2" fill="#141413"/>
<rect x="1085" y="370" width="37" height="2" fill="#191918"/>
<rect x="1085" y="372" width="37" height="2" fill="#141413"/>
<rect x="1085" y="374" width="37" height="2" fill="#191918"/>
<rect x="1085" y="376" width="37" height="2" fill="#141413"/>
<rect x="1085" y="378" width="37" height="2" fill="#191918"/>
<rect x="1085" y="380" width="37" height="2" fill="#141413"/>
<rect x="1085" y="382" width="37" height="2" fill="#191918"/>
<rect x="1085" y="384" width="37" height="2" fill="#161615"/>
<rect x="1085" y="386" width="37" height="2" fill="#111111"/>
<rect x="1085" y="388" width="37" height="2" fill="#161615"/>
<rect x="1085" y="390" width="37" height="2" fill="#111111"/>
<rect x="1085" y="392" width="37" height="2" fill="#131412"/>
<rect x="1085" y="394" width="37" height="2" fill="#0f100e"/>
<rect x="1085" y="396" width="37" height="2" fill="#131412"/>
<rect x="1085" y="398" width="37" height="2" fill="#0f100e"/>
<rect x="1085" y="400" width="37" height="2" fill="#0f0f0f"/>
<rect x="1085" y="402" width="37" height="2" fill="#0c0c0c"/>
<rect x="1085" y="404" width="37" height="2" fill="#0f0f0f"/>
<rect x="1085" y="406" width="37" height="2" fill="#0c0c0c"/>
<rect x="1085" y="408" width="37" height="2" fill="#090909"/>
<rect x="1085" y="410" width="37" height="2" fill="#0c0c0c"/>
<rect x="1085" y="412" width="37" height="2" fill="#090909"/>
<rect x="1085" y="414" width="37" height="2" fill="#080808"/>
<rect x="1085" y="416" width="37" height="2" fill="#060606"/>
<rect x="1085" y="418" width="37" height="2" fill="#080808"/>
<rect x="1085" y="420" width="37" height="2" fill="#050505"/>
<rect x="1085" y="422" width="37" height="2" fill="#040404"/>
<rect x="1122" y="314" width="35.40000000000009" height="2" fill="#020202"/>
<rect x="1122" y="316" width="35.40000000000009" height="2" fill="#020202"/>
<rect x="1122" y="318" width="35.40000000000009" height="2" fill="#020202"/>
<rect x="1122" y="320" width="35.40000000000009" height="2" fill="#020202"/>
<rect x="1122" y="322" width="35.40000000000009" height="2" fill="#040405"/>
<rect x="1122" y="324" width="35.40000000000009" height="2" fill="#040405"/>
<rect x="1122" y="326" width="35.40000000000009" height="2" fill="#040405"/>
<rect x="1122" y="328" width="35.40000000000009" height="2" fill="#040405"/>
<rect x="1122" y="330" width="35.40000000000009" height="2" fill="#08090a"/>
<rect x="1122" y="332" width="35.40000000000009" height="2" fill="#060708"/>
<rect x="1122" y="334" width="35.40000000000009" height="2" fill="#08090a"/>
<rect x="1122" y="336" width="35.40000000000009" height="2" fill="#060708"/>
<rect x="1122" y="338" width="35.40000000000009" height="2" fill="#08090a"/>
<rect x="1122" y="340" width="35.40000000000009" height="2" fill="#0d0d0e"/>
<rect x="1122" y="342" width="35.40000000000009" height="2" fill="#0a0b0b"/>
<rect x="1122" y="344" width="35.40000000000009" height="2" fill="#0d0d0e"/>
<rect x="1122" y="346" width="35.40000000000009" height="2" fill="#0a0b0b"/>
<rect x="1122" y="348" width="35.40000000000009" height="2" fill="#111111"/>
<rect x="1122" y="350" width="35.40000000000009" height="2" fill="#0e0e0e"/>
<rect x="1122" y="352" width="35.40000000000009" height="2" fill="#111111"/>
<rect x="1122" y="354" width="35.40000000000009" height="2" fill="#0e0e0e"/>
<rect x="1122" y="356" width="35.40000000000009" height="2" fill="#111111"/>
<rect x="1122" y="358" width="35.40000000000009" height="2" fill="#0e0e0e"/>
<rect x="1122" y="360" width="35.40000000000009" height="2" fill="#121212"/>
<rect x="1122" y="362" width="35.40000000000009" height="2" fill="#0f0f0f"/>
<rect x="1122" y="364" width="35.40000000000009" height="2" fill="#121212"/>
<rect x="1122" y="366" width="35.40000000000009" height="2" fill="#141413"/>
<rect x="1122" y="368" width="35.40000000000009" height="2" fill="#10100f"/>
<rect x="1122" y="370" width="35.40000000000009" height="2" fill="#141413"/>
<rect x="1122" y="372" width="35.40000000000009" height="2" fill="#10100f"/>
<rect x="1122" y="374" width="35.40000000000009" height="2" fill="#141413"/>
<rect x="1122" y="376" width="35.40000000000009" height="2" fill="#10100f"/>
<rect x="1122" y="378" width="35.40000000000009" height="2" fill="#141413"/>
<rect x="1122" y="380" width="35.40000000000009" height="2" fill="#10100f"/>
<rect x="1122" y="382" width="35.40000000000009" height="2" fill="#141413"/>
<rect x="1122" y="384" width="35.40000000000009" height="2" fill="#111111"/>
<rect x="1122" y="386" width="35.40000000000009" height="2" fill="#0e0e0d"/>
<rect x="1122" y="388" width="35.40000000000009" height="2" fill="#111111"/>
<rect x="1122" y="390" width="35.40000000000009" height="2" fill="#0e0e0d"/>
<rect x="1122" y="392" width="35.40000000000009" height="2" fill="#0f100e"/>
<rect x="1122" y="394" width="35.40000000000009" height="2" fill="#0c0d0b"/>
<rect x="1122" y="396" width="35.40000000000009" height="2" fill="#0f100e"/>
<rect x="1122" y="398" width="35.40000000000009" height="2" fill="#0c0d0b"/>
<rect x="1122" y="400" width="35.40000000000009" height="2" fill="#0c0c0c"/>
<rect x="1122" y="402" width="35.40000000000009" height="2" fill="#090909"/>
<rect x="1122" y="404" width="35.40000000000009" height="2" fill="#0c0c0c"/>
<rect x="1122" y="406" width="35.40000000000009" height="2" fill="#090909"/>
<rect x="1122" y="408" width="35.40000000000009" height="2" fill="#070707"/>
<rect x="1122" y="410" width="35.40000000000009" height="2" fill="#090909"/>
<rect x="1122" y="412" width="35.40000000000009" height="2" fill="#070707"/>
<rect x="1122" y="414" width="35.40000000000009" height="2" fill="#060606"/>
<rect x="1122" y="416" width="35.40000000000009" height="2" fill="#050505"/>
<rect x="1122" y="418" width="35.40000000000009" height="2" fill="#060606"/>
<rect x="1122" y="420" width="35.40000000000009" height="2" fill="#040404"/>
<rect x="1122" y="422" width="35.40000000000009" height="2" fill="#030303"/>
<rect x="516" y="359.5" width="458" height="2.5" fill="#9a78d0" opacity="1"/>
<rect x="974" y="359.5" width="183.4000000000001" height="2.5" fill="#3c2c60" opacity="1"/>
<rect x="516" y="388" width="641.4000000000001" height="2" fill="#3c4a34" opacity="0.8"/>
<rect x="516" y="399.5" width="458" height="4" fill="#2c2cc8" opacity="1"/>
<rect x="974" y="399.5" width="183.4000000000001" height="3.5" fill="#1414a0" opacity="1"/>
<rect x="516" y="414.6" width="493" height="2.4" fill="#a040a8" opacity="1"/>
<rect x="1009" y="414.6" width="148.4000000000001" height="3" fill="#c81058" opacity="1"/>
<rect x="516" y="423" width="458" height="9" fill="#0e7a22" opacity="1"/>
<rect x="516" y="425" width="458" height="5" fill="#18a030" opacity="0.8"/>
<rect x="516" y="432" width="458" height="6" fill="#062a0a" opacity="1"/>
<rect x="974" y="427" width="183.4000000000001" height="4" fill="#00ff00" opacity="1"/>
<rect x="974" y="422" width="183.4000000000001" height="5" fill="#0a5014" opacity="0.7"/>
<rect x="564" y="440.5" width="75" height="3" fill="#0000c8" opacity="1"/>
<rect x="674" y="440.5" width="77" height="3" fill="#0000c8" opacity="1"/>
<rect x="823" y="440.5" width="39" height="3" fill="#0000c8" opacity="1"/>
<rect x="973" y="440.5" width="184.4000000000001" height="2.5" fill="#0000b0" opacity="1"/>
<rect x="516" y="451.5" width="458" height="5" fill="#6e5c38" opacity="1"/>
<rect x="974" y="451.5" width="183.4000000000001" height="5" fill="#66663a" opacity="1"/>
<rect x="564" y="457" width="75" height="5" fill="#0a6a50" opacity="1"/>
<rect x="516" y="457" width="48" height="2" fill="#a03428" opacity="1"/>
<rect x="639" y="457" width="334" height="2" fill="#903828" opacity="1"/>
<rect x="973" y="457" width="184.4000000000001" height="2.5" fill="#84402c" opacity="1"/>
<rect x="516" y="462.5" width="123" height="3.5" fill="#c86484" opacity="1"/>
<rect x="639" y="462.5" width="334" height="3.5" fill="#008c8c" opacity="1"/>
<rect x="973" y="462" width="184.4000000000001" height="3" fill="#7c6666" opacity="1"/>
<rect x="516" y="473.5" width="458" height="2.5" fill="#a84800" opacity="1"/>
<rect x="974" y="473.5" width="183.4000000000001" height="2.5" fill="#5c3000" opacity="1"/>
<rect x="516" y="484" width="458" height="2.5" fill="#8a4400" opacity="1"/>
<rect x="973" y="484" width="184.4000000000001" height="2.5" fill="#7a3ca0" opacity="1"/>
<rect x="516" y="492.5" width="641.4000000000001" height="2.5" fill="#6a34a8" opacity="1"/>
</svg>
<svg style="left:516px;top:524.6px" width="758" height="205.79999999999995" viewBox="516 524.6 758 205.79999999999995" >
<rect x="516" y="524.6" width="758" height="205.79999999999995" fill="#000"/>
<rect x="516" y="623.8" width="758" height="2.4" fill="#7c7c7c"/>
<path d="M516.0 622.0 517.0 622.0 518.0 621.8 519.0 621.9 520.0 622.2 521.0 622.2 522.0 615.6 523.0 601.0 524.0 587.1 525.0 577.5 526.0 581.2 527.0 588.6 528.0 592.1 529.0 591.5 530.0 593.2 531.0 597.1 532.0 598.8 533.0 600.0 534.0 603.5 535.0 606.4 536.0 606.3 537.0 606.4 538.0 608.5 539.0 610.3 540.0 610.8 541.0 612.1 542.0 614.0 543.0 614.4 544.0 614.1 545.0 615.0 546.0 616.4 547.0 603.3 548.0 589.4 549.0 585.5 550.0 589.0 551.0 588.0 552.0 589.7 553.0 595.0 554.0 598.1 555.0 599.1 556.0 601.7 557.0 604.4 558.0 604.5 559.0 604.6 560.0 607.2 561.0 609.8 562.0 610.4 563.0 611.1 564.0 612.8 565.0 613.3 566.0 613.2 567.0 614.2 568.0 616.0 569.0 616.6 570.0 616.7 571.0 617.5 572.0 618.1 573.0 609.4 574.0 593.3 575.0 582.1 576.0 584.3 577.0 584.6 578.0 586.8 579.0 591.1 580.0 592.6 581.0 593.4 582.0 597.8 583.0 602.1 584.0 602.6 585.0 602.8 586.0 605.1 587.0 606.8 588.0 607.2 589.0 608.9 590.0 611.6 591.0 612.5 592.0 612.1 593.0 613.0 594.0 614.4 595.0 614.9 596.0 615.4 597.0 616.8 598.0 605.9 599.0 591.2 600.0 582.7 601.0 588.1 602.0 591.5 603.0 592.8 604.0 596.6 605.0 600.6 606.0 601.0 607.0 600.6 608.0 603.2 609.0 606.1 610.0 607.0 611.0 608.2 612.0 610.6 613.0 611.5 614.0 611.0 615.0 611.9 616.0 613.9 617.0 614.8 618.0 615.1 619.0 616.2 620.0 617.0 621.0 616.9 622.0 617.0 623.0 613.8 624.0 605.0 625.0 594.2 626.0 594.0 627.0 597.7 628.0 598.6 629.0 598.5 630.0 601.6 631.0 605.4 632.0 606.4 633.0 606.9 634.0 608.8 635.0 610.0 636.0 609.9 637.0 611.0 638.0 613.3 639.0 614.4 640.0 614.4 641.0 615.1 642.0 616.1 643.0 616.3 644.0 616.5 645.0 617.8 646.0 618.7 647.0 608.1 648.0 592.7 649.0 580.0 650.0 583.4 651.0 584.5 652.0 589.2 653.0 595.1 654.0 596.5 655.0 596.0 656.0 598.6 657.0 601.6 658.0 602.5 659.0 604.1 660.0 607.4 661.0 609.0 662.0 608.6 663.0 609.3 664.0 611.3 665.0 612.3 666.0 612.8 667.0 614.4 668.0 615.7 669.0 615.6 670.0 615.6 671.0 616.7 672.0 615.7 673.0 604.6 674.0 594.2 675.0 594.0 676.0 595.2 677.0 594.5 678.0 597.2 679.0 601.4 680.0 603.0 681.0 604.0 682.0 606.6 683.0 608.1 684.0 607.7 685.0 608.5 686.0 611.1 687.0 612.6 688.0 612.8 689.0 613.8 690.0 615.0 691.0 615.1 692.0 615.2 693.0 616.4 694.0 617.7 695.0 617.9 696.0 614.9 697.0 604.3 698.0 592.8 699.0 587.1 700.0 590.9 701.0 596.8 702.0 598.9 703.0 598.9 704.0 601.2 705.0 603.5 706.0 603.9 707.0 605.0 708.0 608.3 709.0 610.3 710.0 610.2 711.0 610.7 712.0 612.3 713.0 613.0 714.0 613.3 715.0 614.8 716.0 616.4 717.0 616.5 718.0 616.4 719.0 617.2 720.0 617.9 721.0 618.1 722.0 613.6 723.0 602.3 724.0 589.7 725.0 582.2 726.0 585.2 727.0 590.5 728.0 592.7 729.0 594.4 730.0 598.8 731.0 601.7 732.0 601.2 733.0 601.7 734.0 604.8 735.0 607.0 736.0 607.6 737.0 609.4 738.0 611.4 739.0 611.6 740.0 611.4 741.0 612.8 742.0 614.6 743.0 615.1 744.0 615.6 745.0 616.8 746.0 613.2 747.0 600.0 748.0 587.8 749.0 591.3 750.0 594.4 751.0 595.2 752.0 598.2 753.0 600.9 754.0 600.9 755.0 601.6 756.0 605.1 757.0 607.8 758.0 608.2 759.0 609.0 760.0 610.8 761.0 611.4 762.0 611.4 763.0 613.0 764.0 614.9 765.0 615.4 766.0 615.4 767.0 616.3 768.0 617.0 769.0 617.0 770.0 617.6 771.0 618.8 772.0 607.3 773.0 592.2 774.0 581.3 775.0 586.4 776.0 588.2 777.0 589.8 778.0 595.1 779.0 599.3 780.0 599.3 781.0 599.6 782.0 602.5 783.0 604.5 784.0 605.1 785.0 607.2 786.0 610.0 787.0 610.6 788.0 610.2 789.0 611.5 790.0 613.1 791.0 613.7 792.0 614.4 793.0 615.9 794.0 616.7 795.0 616.4 796.0 616.7 797.0 610.1 798.0 596.0 799.0 580.0 800.0 582.1 801.0 587.4 802.0 587.3 803.0 587.5 804.0 592.3 805.0 596.7 806.0 597.9 807.0 599.9 808.0 603.2 809.0 604.1 810.0 603.7 811.0 605.7 812.0 608.8 813.0 609.9 814.0 610.4 815.0 611.9 816.0 613.0 817.0 612.9 818.0 613.4 819.0 615.3 820.0 616.4 821.0 616.2 822.0 602.2 823.0 589.6 824.0 580.6 825.0 581.5 826.0 587.6 827.0 593.5 828.0 594.5 829.0 595.2 830.0 598.4 831.0 600.3 832.0 600.6 833.0 603.0 834.0 606.8 835.0 608.0 836.0 607.8 837.0 609.1 838.0 610.8 839.0 611.2 840.0 612.0 841.0 614.0 842.0 615.3 843.0 615.1 844.0 615.4 845.0 616.5 846.0 617.1 847.0 608.8 848.0 594.6 849.0 583.1 850.0 580.4 851.0 580.0 852.0 584.8 853.0 589.6 854.0 591.1 855.0 593.9 856.0 598.7 857.0 600.4 858.0 599.6 859.0 601.3 860.0 604.7 861.0 606.2 862.0 607.1 863.0 609.4 864.0 611.0 865.0 610.7 866.0 611.0 867.0 612.9 868.0 614.3 869.0 614.7 870.0 615.5 871.0 616.7 872.0 608.6 873.0 592.7 874.0 580.2 875.0 587.3 876.0 589.4 877.0 590.9 878.0 595.0 879.0 597.1 880.0 596.7 881.0 598.8 882.0 603.2 883.0 605.3 884.0 605.5 885.0 607.1 886.0 609.0 887.0 609.1 888.0 609.6 889.0 612.0 890.0 613.8 891.0 613.9 892.0 614.2 893.0 615.4 894.0 603.9 895.0 580.0 896.0 560.6 897.0 547.6 898.0 547.8 899.0 543.8 900.0 547.8 901.0 552.2 902.0 550.7 903.0 553.2 904.0 562.4 905.0 565.6 906.0 561.5 907.0 561.9 908.0 567.1 909.0 568.0 910.0 568.0 911.0 573.8 912.0 578.6 913.0 576.1 914.0 574.1 915.0 578.0 916.0 567.0 917.0 539.3 918.0 528.1 919.0 538.8 920.0 538.1 921.0 531.7 922.0 536.0 923.0 544.8 924.0 546.1 925.0 547.2 926.0 554.7 927.0 557.7 928.0 552.6 929.0 552.7 930.0 560.6 931.0 564.5 932.0 563.8 933.0 552.1 934.0 532.1 935.0 527.9 936.0 524.1 937.0 533.4 938.0 542.9 939.0 542.5 940.0 543.4 941.0 549.9 942.0 550.3 943.0 545.9 944.0 550.2 945.0 559.9 946.0 561.9 947.0 560.1 948.0 563.6 949.0 550.6 950.0 517.8 951.0 522.9 952.0 538.9 953.0 548.5 954.0 548.0 955.0 551.3 956.0 558.7 957.0 560.6 958.0 561.3 959.0 569.3 960.0 577.3 961.0 577.6 962.0 577.2 963.0 581.3 964.0 584.4 965.0 584.4 966.0 587.6 967.0 593.2 968.0 594.7 969.0 593.1 970.0 594.0 971.0 596.4 972.0 596.5 973.0 596.9 974.0 600.1 975.0 601.9 976.0 600.3 977.0 599.8 978.0 602.0 979.0 603.1 980.0 602.9 981.0 604.6 982.0 606.7 983.0 606.1 984.0 604.9 985.0 606.2 986.0 607.9 987.0 608.0 988.0 608.5 989.0 610.2 990.0 610.4 991.0 609.3 992.0 609.7 993.0 611.4 994.0 612.0 995.0 611.9 996.0 612.8 997.0 613.6 998.0 612.9 999.0 612.7 1000.0 614.0 1001.0 615.0 1002.0 614.8 1003.0 615.1 1004.0 615.8 1005.0 615.7 1006.0 615.2 1007.0 616.0 1008.0 617.1 1009.0 617.2 1010.0 617.0 1011.0 617.5 1012.0 617.8 1013.0 617.4 1014.0 617.7 1015.0 618.7 1016.0 619.0 1017.0 618.7 1018.0 618.9 1019.0 619.3 1020.0 619.2 1021.0 619.2 1022.0 619.8 1023.0 620.3 1024.0 620.2 1025.0 620.0 1026.0 620.4 1027.0 620.5 1028.0 620.3 1029.0 620.6 1030.0 621.1 1031.0 621.1 1032.0 620.8 1033.0 620.9 1034.0 621.2 1035.0 621.1 1036.0 621.2 1037.0 621.6 1038.0 621.7 1039.0 621.4 1040.0 621.4 1041.0 621.7 1042.0 621.7 1043.0 621.7 1044.0 621.9 1045.0 622.2 1046.0 622.0 1047.0 621.8 1048.0 621.9 1049.0 622.1 1050.0 622.0 1051.0 622.0 1052.0 622.2 1053.0 622.1 1054.0 621.8 1055.0 621.8 1056.0 622.1 1057.0 622.1 1058.0 622.0 1059.0 622.1 1060.0 622.1 1061.0 621.8 1062.0 621.8 1063.0 622.0 1064.0 622.2 1065.0 622.0 1066.0 622.0 1067.0 622.1 1068.0 621.9 1069.0 621.7 1070.0 621.9 1071.0 622.2 1072.0 622.1 1073.0 622.0 1074.0 622.1 1075.0 622.0 1076.0 621.8 1077.0 621.9 1078.0 622.2 1079.0 622.2 1080.0 621.9 1081.0 622.0 1082.0 622.1 1083.0 621.9 1084.0 621.8 1085.0 622.1 1086.0 622.2 1087.0 622.0 1088.0 621.9 1089.0 622.0 1090.0 622.0 1091.0 621.8 1092.0 622.0 1093.0 622.3 1094.0 622.1 1095.0 621.8 1096.0 621.9 1097.0 622.0 1098.0 621.9 1099.0 621.9 1100.0 622.2 1101.0 622.2 1102.0 621.9 1103.0 621.8 1104.0 622.0 1105.0 622.0 1106.0 621.9 1107.0 622.1 1108.0 622.2 1109.0 621.9 1110.0 621.8 1111.0 622.0 1112.0 622.1 1113.0 621.9 1114.0 622.0 1115.0 622.2 1116.0 622.0 1117.0 621.8 1118.0 621.9 1119.0 622.1 L1119.0 627.8 1118.0 628.0 1117.0 628.0 1116.0 628.1 1115.0 628.1 1114.0 627.7 1113.0 628.0 1112.0 628.1 1111.0 628.0 1110.0 628.1 1109.0 627.8 1108.0 627.9 1107.0 628.2 1106.0 628.0 1105.0 628.0 1104.0 627.9 1103.0 627.9 1102.0 628.2 1101.0 628.1 1100.0 627.8 1099.0 628.0 1098.0 628.0 1097.0 628.1 1096.0 628.2 1095.0 627.8 1094.0 627.9 1093.0 628.1 1092.0 628.0 1091.0 628.1 1090.0 627.9 1089.0 627.8 1088.0 628.2 1087.0 628.1 1086.0 628.0 1085.0 628.0 1084.0 627.8 1083.0 628.1 1082.0 628.2 1081.0 627.9 1080.0 628.0 1079.0 627.9 1078.0 628.0 1077.0 628.2 1076.0 627.9 1075.0 627.8 1074.0 628.1 1073.0 628.0 1072.0 628.2 1071.0 628.0 1070.0 627.7 1069.0 628.1 1068.0 628.1 1067.0 628.0 1066.0 628.0 1065.0 627.8 1064.0 628.0 1063.0 628.2 1062.0 627.9 1061.0 628.0 1060.0 627.9 1059.0 628.0 1058.0 628.3 1057.0 628.0 1056.0 627.8 1055.0 628.0 1054.0 628.0 1053.0 628.2 1052.0 628.0 1051.0 627.7 1050.0 628.0 1049.0 628.1 1048.0 628.0 1047.0 628.1 1046.0 627.8 1045.0 627.9 1044.0 628.2 1043.0 628.0 1042.0 628.1 1041.0 628.0 1040.0 628.1 1039.0 628.6 1038.0 628.4 1037.0 628.2 1036.0 628.5 1035.0 628.5 1034.0 628.9 1033.0 629.0 1032.0 628.6 1031.0 629.0 1030.0 629.4 1029.0 629.4 1028.0 629.7 1027.0 629.4 1026.0 629.6 1025.0 630.4 1024.0 630.2 1023.0 630.3 1022.0 630.4 1021.0 630.4 1020.0 631.3 1019.0 631.4 1018.0 631.0 1017.0 631.5 1016.0 631.6 1015.0 632.2 1014.0 632.7 1013.0 632.0 1012.0 632.5 1011.0 633.2 1010.0 633.3 1009.0 634.0 1008.0 633.5 1007.0 633.5 1006.0 634.9 1005.0 635.0 1004.0 635.2 1003.0 635.3 1002.0 635.0 1001.0 636.6 1000.0 637.2 999.0 636.5 998.0 637.2 997.0 637.2 996.0 638.3 995.0 639.8 994.0 638.5 993.0 638.9 992.0 640.2 991.0 640.5 990.0 642.1 989.0 641.5 988.0 640.7 987.0 643.3 986.0 643.9 985.0 644.3 984.0 644.9 983.0 643.6 982.0 646.2 981.0 648.3 980.0 647.1 979.0 648.1 978.0 648.0 977.0 649.4 976.0 652.9 975.0 651.3 974.0 651.0 973.0 653.3 972.0 653.9 971.0 657.2 970.0 657.0 969.0 654.6 968.0 658.6 967.0 660.5 966.0 661.5 965.0 663.2 964.0 660.5 963.0 664.9 962.0 671.4 961.0 671.2 960.0 674.3 959.0 675.3 958.0 678.2 957.0 689.4 956.0 689.9 955.0 689.8 954.0 697.1 953.0 700.5 952.0 712.8 951.0 719.1 950.0 713.8 949.0 695.7 948.0 691.4 947.0 693.6 946.0 698.4 945.0 692.7 944.0 695.7 943.0 706.6 942.0 705.7 941.0 708.5 940.0 708.0 939.0 707.0 938.0 721.7 937.0 723.3 936.0 718.8 935.0 724.6 934.0 724.4 933.0 705.5 932.0 686.2 931.0 680.6 930.0 683.8 929.0 688.4 928.0 690.5 927.0 696.8 926.0 692.1 925.0 691.7 924.0 702.4 923.0 703.3 922.0 706.3 921.0 706.7 920.0 702.9 919.0 715.8 918.0 721.2 917.0 701.6 916.0 679.9 915.0 666.6 914.0 670.6 913.0 676.1 912.0 672.1 911.0 673.1 910.0 676.7 909.0 678.2 908.0 684.5 907.0 682.1 906.0 679.4 905.0 687.5 904.0 689.5 903.0 692.4 902.0 694.0 901.0 689.0 900.0 697.6 899.0 704.7 898.0 701.9 897.0 705.4 896.0 681.9 895.0 664.0 894.0 646.8 893.0 634.7 892.0 635.1 891.0 636.2 890.0 636.9 889.0 639.1 888.0 639.6 887.0 639.1 886.0 641.5 885.0 643.1 884.0 644.9 883.0 646.8 882.0 645.9 881.0 648.8 880.0 653.1 879.0 653.9 878.0 656.7 877.0 657.3 876.0 659.6 875.0 667.7 874.0 669.0 873.0 653.7 872.0 641.3 871.0 632.0 870.0 633.3 869.0 633.9 868.0 633.5 867.0 634.6 866.0 635.6 865.0 636.6 864.0 638.0 863.0 637.4 862.0 638.5 861.0 641.1 860.0 641.8 859.0 643.4 858.0 643.9 857.0 644.4 856.0 648.9 855.0 650.6 854.0 651.0 853.0 653.5 852.0 654.4 851.0 659.7 850.0 664.4 849.0 659.9 848.0 649.0 847.0 637.7 846.0 632.9 845.0 634.2 844.0 633.9 843.0 634.2 842.0 635.9 841.0 636.6 840.0 637.8 839.0 638.3 838.0 638.1 837.0 640.9 836.0 642.7 835.0 642.9 834.0 644.6 833.0 644.9 832.0 647.9 831.0 652.0 830.0 651.3 829.0 653.1 828.0 656.1 827.0 658.6 826.0 665.0 825.0 665.3 824.0 665.2 823.0 662.0 822.0 647.9 821.0 634.1 820.0 633.1 819.0 632.7 818.0 634.1 817.0 635.3 816.0 635.6 815.0 636.5 814.0 636.5 813.0 637.8 812.0 640.4 811.0 640.4 810.0 641.1 809.0 642.6 808.0 643.6 807.0 647.4 806.0 648.4 805.0 647.8 804.0 651.4 803.0 653.7 802.0 657.1 801.0 660.5 800.0 658.8 799.0 660.5 798.0 650.9 797.0 637.9 796.0 631.7 795.0 631.7 794.0 632.0 793.0 633.6 792.0 633.9 791.0 634.1 790.0 634.9 789.0 635.2 788.0 637.2 787.0 638.3 786.0 637.7 785.0 639.3 784.0 640.5 783.0 642.3 782.0 644.7 781.0 643.8 780.0 645.3 779.0 649.0 778.0 650.3 777.0 653.3 776.0 653.7 775.0 654.2 774.0 661.1 773.0 652.6 772.0 640.8 771.0 631.2 770.0 631.3 769.0 632.4 768.0 633.3 767.0 633.0 766.0 633.7 765.0 634.4 764.0 635.3 763.0 637.0 762.0 636.7 761.0 637.0 760.0 639.2 759.0 640.1 758.0 642.0 757.0 642.6 756.0 642.2 755.0 645.8 754.0 648.1 753.0 648.9 752.0 651.2 751.0 651.0 750.0 655.0 749.0 660.6 748.0 657.5 747.0 646.8 746.0 636.4 745.0 632.4 744.0 633.9 743.0 633.9 742.0 633.8 741.0 635.2 740.0 635.9 739.0 637.4 738.0 638.2 737.0 637.6 736.0 639.7 735.0 641.8 734.0 642.5 733.0 644.3 732.0 644.0 731.0 646.0 730.0 650.5 729.0 650.8 728.0 652.3 727.0 654.4 726.0 655.9 725.0 662.7 724.0 658.8 723.0 644.9 722.0 634.9 721.0 631.5 720.0 632.4 719.0 633.1 718.0 632.6 717.0 633.5 716.0 634.8 715.0 635.3 714.0 636.5 713.0 636.3 712.0 636.9 711.0 639.6 710.0 640.2 709.0 641.0 708.0 642.1 707.0 642.5 706.0 646.2 705.0 648.3 704.0 647.6 703.0 650.2 702.0 652.0 701.0 655.5 700.0 660.1 699.0 658.6 698.0 655.8 697.0 646.7 696.0 635.0 695.0 633.8 694.0 633.8 693.0 633.8 692.0 635.8 691.0 636.6 690.0 637.1 689.0 638.0 688.0 638.0 687.0 640.4 686.0 642.6 685.0 642.2 684.0 643.8 683.0 645.0 682.0 647.1 681.0 651.3 680.0 650.7 679.0 651.6 678.0 655.9 677.0 658.1 676.0 663.1 675.0 664.6 674.0 657.8 673.0 648.7 672.0 636.2 671.0 631.7 670.0 632.2 669.0 632.0 668.0 633.0 667.0 634.5 666.0 634.4 665.0 635.1 664.0 635.6 663.0 636.4 662.0 638.8 661.0 638.9 660.0 638.9 659.0 640.9 658.0 641.9 657.0 644.5 656.0 646.0 655.0 645.0 654.0 648.2 653.0 651.2 652.0 652.9 651.0 656.1 650.0 655.3 649.0 658.4 648.0 651.1 647.0 639.0 646.0 633.2 645.0 633.6 644.0 633.9 643.0 635.9 642.0 636.5 641.0 636.3 640.0 637.7 639.0 638.4 638.0 640.4 637.0 642.2 636.0 641.3 635.0 643.1 634.0 645.7 633.0 647.2 632.0 650.1 631.0 649.7 630.0 650.9 629.0 656.8 628.0 658.5 627.0 660.8 626.0 663.0 625.0 660.6 624.0 652.0 623.0 639.1 622.0 630.9 621.0 631.5 620.0 631.8 619.0 632.6 618.0 633.8 617.0 633.4 616.0 633.9 615.0 635.2 614.0 635.8 613.0 637.5 612.0 637.5 611.0 637.4 610.0 640.1 609.0 641.2 608.0 642.4 607.0 643.6 606.0 643.3 605.0 646.8 604.0 650.0 603.0 649.8 602.0 652.1 601.0 653.2 600.0 656.4 599.0 654.5 598.0 642.0 597.0 631.8 596.0 632.5 595.0 633.0 594.0 634.3 593.0 634.5 592.0 634.2 591.0 635.9 590.0 637.0 589.0 637.8 588.0 639.0 587.0 638.5 586.0 640.5 585.0 643.3 584.0 643.4 583.0 645.0 582.0 645.7 581.0 647.3 580.0 652.3 579.0 652.8 578.0 653.2 577.0 656.7 576.0 658.6 575.0 661.6 574.0 649.7 573.0 636.3 572.0 632.2 571.0 633.0 570.0 633.6 569.0 634.6 568.0 634.2 567.0 635.1 566.0 637.1 565.0 637.5 564.0 638.5 563.0 639.0 562.0 639.5 561.0 642.8 560.0 643.9 559.0 643.9 558.0 646.0 557.0 646.9 556.0 650.6 555.0 653.9 554.0 652.5 553.0 655.5 552.0 659.4 551.0 662.3 550.0 667.9 549.0 667.0 548.0 659.0 547.0 648.7 546.0 634.0 545.0 633.3 544.0 633.7 543.0 633.6 542.0 635.4 541.0 636.5 540.0 636.4 539.0 637.5 538.0 637.9 537.0 639.8 536.0 642.2 535.0 641.6 534.0 642.7 533.0 644.9 532.0 646.4 531.0 650.1 530.0 650.2 529.0 650.2 528.0 655.3 527.0 657.7 526.0 660.8 525.0 663.4 524.0 654.1 523.0 645.0 522.0 633.5 521.0 628.0 520.0 628.0 519.0 627.8 518.0 627.9 517.0 628.3 516.0 628.0Z" fill="#0a14ff"/>
<rect x="516" y="623.8" width="524" height="2.4" fill="#8c8cff"/>
<rect x="1040" y="623.8" width="80" height="2.4" fill="#3c3cff"/>
</svg>
<svg style="left:516px;top:735.4px" width="758" height="205.39999999999998" viewBox="516 735.4 758 205.39999999999998" >
<rect x="516" y="735.4" width="758" height="205.39999999999998" fill="#000"/>
<path d="M516.0 932.0 L520.0 933.0 L522.5 912.1 L525.5 895.2 L527.0 894.2 L528.5 896.2 L531.0 912.5 L533.0 918.2 L535.0 922.4 L537.0 925.4 L539.0 927.7 L541.0 929.4 L543.0 930.6 L545.5 933.0 L548.0 912.1 L551.0 895.2 L552.5 894.2 L554.0 896.2 L556.5 912.5 L558.5 918.2 L560.5 922.4 L562.5 925.4 L564.5 927.7 L566.5 929.4 L568.5 930.6 L569.9 933.0 L572.4 912.1 L575.4 895.2 L576.9 894.2 L578.4 896.2 L580.9 912.5 L582.9 918.2 L584.9 922.4 L586.9 925.4 L588.9 927.7 L590.9 929.4 L592.9 930.6 L593.8 933.0 L596.3 917.2 L599.3 905.4 L600.8 904.4 L602.3 906.4 L604.8 918.0 L606.8 922.2 L608.8 925.3 L610.8 927.6 L612.8 929.3 L614.8 930.6 L616.8 931.5 L619.3 933.0 L621.8 916.3 L624.8 903.7 L626.3 902.7 L627.8 904.7 L630.3 917.1 L632.3 921.6 L634.3 924.9 L636.3 927.3 L638.3 929.1 L640.3 930.4 L642.3 931.3 L643.7 933.0 L646.2 915.8 L649.2 902.5 L650.7 901.5 L652.2 903.5 L654.7 916.5 L656.7 921.1 L658.7 924.5 L660.7 927.0 L662.7 928.9 L664.7 930.2 L666.7 931.2 L669.2 933.0 L671.7 915.5 L674.7 902.0 L676.2 901.0 L677.7 903.0 L680.2 916.2 L682.2 920.9 L684.2 924.4 L686.2 926.9 L688.2 928.8 L690.2 930.2 L692.2 931.2 L694.2 933.0 L696.7 913.5 L699.7 898.0 L701.2 897.0 L702.7 899.0 L705.2 914.0 L707.2 919.3 L709.2 923.2 L711.2 926.1 L713.2 928.2 L715.2 929.7 L717.2 930.8 L718.5 933.0 L721.0 913.5 L724.0 898.0 L725.5 897.0 L727.0 899.0 L729.5 914.0 L731.5 919.3 L733.5 923.2 L735.5 926.1 L737.5 928.2 L739.5 929.7 L741.5 930.8 L742.9 933.0 L745.4 914.1 L748.4 899.1 L749.9 898.1 L751.4 900.1 L753.9 914.6 L755.9 919.8 L757.9 923.5 L759.9 926.3 L761.9 928.3 L763.9 929.8 L765.9 930.9 L768.5 933.0 L771.0 913.5 L774.0 898.0 L775.5 897.0 L777.0 899.0 L779.5 914.0 L781.5 919.3 L783.5 923.2 L785.5 926.1 L787.5 928.2 L789.5 929.7 L791.5 930.8 L794.0 933.0 L796.5 910.7 L799.5 892.3 L801.0 891.3 L802.5 893.3 L805.0 910.9 L807.0 917.0 L809.0 921.5 L811.0 924.8 L813.0 927.3 L815.0 929.0 L817.0 930.4 L818.9 933.0 L821.4 909.8 L824.4 890.6 L825.9 889.6 L827.4 891.6 L829.9 910.0 L831.9 916.4 L833.9 921.0 L835.9 924.5 L837.9 927.0 L839.9 928.9 L841.9 930.2 L843.3 933.0 L845.8 909.2 L848.8 889.5 L850.3 888.5 L851.8 890.5 L854.3 909.4 L856.3 915.9 L858.3 920.7 L860.3 924.2 L862.3 926.8 L864.3 928.7 L866.3 930.1 L868.9 933.0 L871.4 909.2 L874.4 889.5 L875.9 888.5 L877.4 890.5 L879.9 909.4 L881.9 915.9 L883.9 920.7 L885.9 924.2 L887.9 926.8 L889.9 928.7 L891.9 930.1 L894.6 932.8 L898.6 880.0 L902.6 824.0 L906.8 856.0 L911.0 891.4 L915.0 848.0 L919.0 802.8 L923.2 840.0 L927.6 873.8 L931.4 820.0 L935.4 768.6 L939.6 816.0 L944.0 858.6 L948.0 796.0 L952.4 737.6 L955.2 770.0 L958.0 810.0 L961.2 846.0 L965.0 872.0 L970.0 890.0 L975.0 900.0 L981.4 908.0 L990.0 915.0 L1000.0 920.0 L1014.0 924.0 L1040.0 927.2 L1080.0 930.8 L1112.0 934.8 L1145.6 939.2" fill="none" stroke="#d010d0" stroke-width="2.6" stroke-linejoin="round"/>
</svg>
<div style="left:489px;top:941px;width:785px;height:19px;background:#ece9d8"></div>
<div style="left:517px;top:941px;width:757px;height:19px;background:linear-gradient(#f3f1ec,#fefefb)"></div>
<div style="left:517px;top:942px;width:17px;height:17px;background:linear-gradient(135deg,#d6e2ff,#b9cbfa);border:1px solid #fff;border-radius:3px;box-sizing:border-box"></div>
<svg style="left:517px;top:942px" width="17" height="17" viewBox="0 0 17 17"><path d="M10 4.5l-4 4 4 4" fill="none" stroke="#4d6185" stroke-width="2.2"/></svg>
<div style="left:1257px;top:942px;width:17px;height:17px;background:linear-gradient(135deg,#d6e2ff,#b9cbfa);border:1px solid #fff;border-radius:3px;box-sizing:border-box"></div>
<svg style="left:1257px;top:942px" width="17" height="17" viewBox="0 0 17 17"><path d="M7 4.5l4 4-4 4" fill="none" stroke="#4d6185" stroke-width="2.2"/></svg>
<div style="left:698px;top:942px;width:7px;height:17px;background:linear-gradient(90deg,#c9d7fd,#c2d2fc 40%,#b4c8f8);border:1px solid #fff;border-radius:2px;box-sizing:border-box"></div>
<div style="left:1274px;top:941px;width:17px;height:19px;background:#ece9d8"></div>
<div style="left:1274px;top:102px;width:17px;height:839px;background:linear-gradient(90deg,#f3f1ec,#fefefb)"></div>
<div style="left:1274px;top:102px;width:17px;height:17px;background:linear-gradient(135deg,#d6e2ff,#b9cbfa);border:1px solid #fff;border-radius:3px;box-sizing:border-box"></div>
<svg style="left:1274px;top:102px" width="17" height="17" viewBox="0 0 17 17"><path d="M4.5 10l4-4 4 4" fill="none" stroke="#4d6185" stroke-width="2.2"/></svg>
<div style="left:1274px;top:924px;width:17px;height:17px;background:linear-gradient(135deg,#d6e2ff,#b9cbfa);border:1px solid #fff;border-radius:3px;box-sizing:border-box"></div>
<svg style="left:1274px;top:924px" width="17" height="17" viewBox="0 0 17 17"><path d="M4.5 6.5l4 4 4-4" fill="none" stroke="#4d6185" stroke-width="2.2"/></svg>
<div style="left:1275px;top:119px;width:15px;height:805px;background:linear-gradient(90deg,#c9d7fd,#c2d2fc 40%,#b4c8f8);border:1px solid #fff;border-radius:3px;box-sizing:border-box"></div>
<div style="left:14px;top:960px;width:1280px;height:6px;background:linear-gradient(#ece9d8 0,#ece9d8 16%,#0855dd 17%,#0046d8 60%,#001ea0)"></div>
</div></body></html>
